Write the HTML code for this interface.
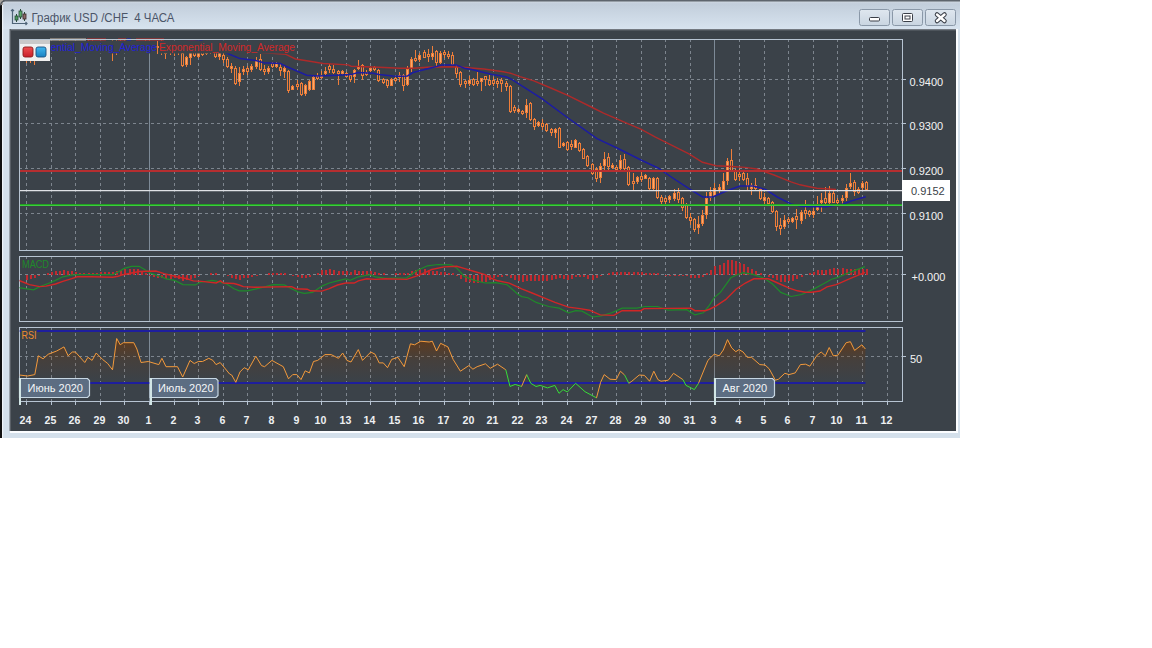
<!DOCTYPE html><html><head><meta charset="utf-8"><style>html,body{margin:0;padding:0;background:#fff;width:1152px;height:648px;overflow:hidden}svg{position:absolute;left:0;top:0}text{font-family:"Liberation Sans",sans-serif}</style></head><body>
<svg width="1152" height="648" viewBox="0 0 1152 648">
<defs>
<linearGradient id="tb" x1="0" y1="0" x2="0" y2="1"><stop offset="0" stop-color="#d2dae2"/><stop offset="0.1" stop-color="#c2cedb"/><stop offset="1" stop-color="#d7e3ef"/></linearGradient>
<linearGradient id="lr" x1="0" y1="0" x2="0" y2="1"><stop offset="0" stop-color="#f05050"/><stop offset="1" stop-color="#c81e28"/></linearGradient><linearGradient id="lb" x1="0" y1="0" x2="0" y2="1"><stop offset="0" stop-color="#40b8f0"/><stop offset="1" stop-color="#1a80c0"/></linearGradient><linearGradient id="btn" x1="0" y1="0" x2="0" y2="1"><stop offset="0" stop-color="#dfe7ef"/><stop offset="1" stop-color="#c9d5e1"/></linearGradient>
<linearGradient id="rsif" gradientUnits="userSpaceOnUse" x1="0" y1="330" x2="0" y2="382"><stop offset="0" stop-color="#6e370a" stop-opacity="0.92"/><stop offset="0.29" stop-color="#6e370a" stop-opacity="0.57"/><stop offset="0.58" stop-color="#6e370a" stop-opacity="0.2"/><stop offset="1" stop-color="#6e370a" stop-opacity="0"/></linearGradient>
<clipPath id="cm"><rect x="19.5" y="39.5" width="883.0" height="211.0"/></clipPath>
<clipPath id="cc"><rect x="19.5" y="256.5" width="883.0" height="65.0"/></clipPath>
<clipPath id="cr"><rect x="19.5" y="327.5" width="883.0" height="74.0"/></clipPath>
<clipPath id="rsiabove"><rect x="0" y="0" width="1152" height="382.7"/></clipPath>
<clipPath id="rsibelow"><rect x="0" y="382.7" width="1152" height="100"/></clipPath>
</defs>
<rect x="0" y="0" width="960" height="438" fill="#d4e0eb"/>
<rect x="2" y="1" width="958" height="28" fill="url(#tb)"/>
<rect x="0" y="0" width="960" height="1.5" fill="#5e656d"/>
<rect x="0" y="5" width="2" height="433" fill="#111"/>
<rect x="0" y="0" width="3" height="5" fill="#a8a49e"/><path d="M0.5 5.5 Q1 1.5 4.5 0.8" fill="none" stroke="#50565c" stroke-width="1.2"/><rect x="2" y="5" width="1.2" height="433" fill="#eef3f8"/>
<g fill="none" stroke="#4f6478" stroke-width="1.2">
<path d="M12.5 9.5 V23.5 H27"/><path d="M11 11 L12.5 9.5 L14 11"/><path d="M25.5 22 L27 23.5 L25.5 25"/>
</g>
<g stroke="#2a4a3a" stroke-width="1"><line x1="16.5" y1="14" x2="16.5" y2="22"/><line x1="20.5" y1="9" x2="20.5" y2="19"/><line x1="24.5" y1="12" x2="24.5" y2="21"/></g>
<rect x="15" y="16" width="3" height="4" fill="#4a9a5a" stroke="#2a4a3a" stroke-width="0.8"/>
<rect x="19" y="11" width="3" height="6" fill="#5aaa6a" stroke="#2a4a3a" stroke-width="0.8"/>
<rect x="23" y="14" width="3" height="5" fill="#8a6a6a" stroke="#3a2a2a" stroke-width="0.8"/>
<text x="31.5" y="21.7" font-size="12" fill="#4b5568" xml:space="preserve" textLength="143" lengthAdjust="spacingAndGlyphs">График USD /CHF  4 ЧАСА</text>
<rect x="859.5" y="9.5" width="30" height="16" rx="2" fill="url(#btn)" stroke="#8a98a8" stroke-width="1"/>
<rect x="892.5" y="9.5" width="30" height="16" rx="2" fill="url(#btn)" stroke="#8a98a8" stroke-width="1"/>
<rect x="925.5" y="9.5" width="30" height="16" rx="2" fill="url(#btn)" stroke="#8a98a8" stroke-width="1"/>
<rect x="869.5" y="17.5" width="10" height="3.5" rx="1" fill="#fff" stroke="#3a3f48" stroke-width="1"/>
<rect x="902.5" y="13.5" width="10" height="8" rx="1" fill="#fff" stroke="#3a3f48" stroke-width="1"/><rect x="905" y="16" width="5" height="3" fill="none" stroke="#3a3f48" stroke-width="1"/>
<path d="M937 14.5 L944.5 21 M944.5 14.5 L937 21" stroke="#3a3f48" stroke-width="4.5" stroke-linecap="round"/><path d="M937 14.5 L944.5 21 M944.5 14.5 L937 21" stroke="#fff" stroke-width="2.4" stroke-linecap="round"/>
<rect x="10" y="29" width="946" height="402" fill="#3b4249"/>
<rect x="10" y="29" width="946" height="1" fill="#747a82"/><rect x="10" y="30" width="946" height="1" fill="#4e555c"/>
<rect x="9" y="29" width="1" height="402" fill="#9aa2aa"/><rect x="10" y="29" width="1" height="402" fill="#5a6067"/>
<rect x="956" y="29" width="2" height="404" fill="#fbfdff"/>
<rect x="10" y="431" width="948" height="2" fill="#fbfdff"/>
<line x1="26.5" y1="39.0" x2="26.5" y2="250.5" stroke="#7d858e" stroke-width="1" stroke-dasharray="3 3" shape-rendering="crispEdges"/>
<line x1="51.5" y1="39.0" x2="51.5" y2="250.5" stroke="#7d858e" stroke-width="1" stroke-dasharray="3 3" shape-rendering="crispEdges"/>
<line x1="75.5" y1="39.0" x2="75.5" y2="250.5" stroke="#7d858e" stroke-width="1" stroke-dasharray="3 3" shape-rendering="crispEdges"/>
<line x1="100.5" y1="39.0" x2="100.5" y2="250.5" stroke="#7d858e" stroke-width="1" stroke-dasharray="3 3" shape-rendering="crispEdges"/>
<line x1="124.5" y1="39.0" x2="124.5" y2="250.5" stroke="#7d858e" stroke-width="1" stroke-dasharray="3 3" shape-rendering="crispEdges"/>
<line x1="149.5" y1="39.5" x2="149.5" y2="250.5" stroke="#7d8a97" stroke-width="1"/>
<line x1="174.5" y1="39.0" x2="174.5" y2="250.5" stroke="#7d858e" stroke-width="1" stroke-dasharray="3 3" shape-rendering="crispEdges"/>
<line x1="198.5" y1="39.0" x2="198.5" y2="250.5" stroke="#7d858e" stroke-width="1" stroke-dasharray="3 3" shape-rendering="crispEdges"/>
<line x1="223.5" y1="39.0" x2="223.5" y2="250.5" stroke="#7d858e" stroke-width="1" stroke-dasharray="3 3" shape-rendering="crispEdges"/>
<line x1="247.5" y1="39.0" x2="247.5" y2="250.5" stroke="#7d858e" stroke-width="1" stroke-dasharray="3 3" shape-rendering="crispEdges"/>
<line x1="272.5" y1="39.0" x2="272.5" y2="250.5" stroke="#7d858e" stroke-width="1" stroke-dasharray="3 3" shape-rendering="crispEdges"/>
<line x1="297.5" y1="39.0" x2="297.5" y2="250.5" stroke="#7d858e" stroke-width="1" stroke-dasharray="3 3" shape-rendering="crispEdges"/>
<line x1="321.5" y1="39.0" x2="321.5" y2="250.5" stroke="#7d858e" stroke-width="1" stroke-dasharray="3 3" shape-rendering="crispEdges"/>
<line x1="346.5" y1="39.0" x2="346.5" y2="250.5" stroke="#7d858e" stroke-width="1" stroke-dasharray="3 3" shape-rendering="crispEdges"/>
<line x1="370.5" y1="39.0" x2="370.5" y2="250.5" stroke="#7d858e" stroke-width="1" stroke-dasharray="3 3" shape-rendering="crispEdges"/>
<line x1="395.5" y1="39.0" x2="395.5" y2="250.5" stroke="#7d858e" stroke-width="1" stroke-dasharray="3 3" shape-rendering="crispEdges"/>
<line x1="419.5" y1="39.0" x2="419.5" y2="250.5" stroke="#7d858e" stroke-width="1" stroke-dasharray="3 3" shape-rendering="crispEdges"/>
<line x1="444.5" y1="39.0" x2="444.5" y2="250.5" stroke="#7d858e" stroke-width="1" stroke-dasharray="3 3" shape-rendering="crispEdges"/>
<line x1="469.5" y1="39.0" x2="469.5" y2="250.5" stroke="#7d858e" stroke-width="1" stroke-dasharray="3 3" shape-rendering="crispEdges"/>
<line x1="493.5" y1="39.0" x2="493.5" y2="250.5" stroke="#7d858e" stroke-width="1" stroke-dasharray="3 3" shape-rendering="crispEdges"/>
<line x1="518.5" y1="39.0" x2="518.5" y2="250.5" stroke="#7d858e" stroke-width="1" stroke-dasharray="3 3" shape-rendering="crispEdges"/>
<line x1="542.5" y1="39.0" x2="542.5" y2="250.5" stroke="#7d858e" stroke-width="1" stroke-dasharray="3 3" shape-rendering="crispEdges"/>
<line x1="567.5" y1="39.0" x2="567.5" y2="250.5" stroke="#7d858e" stroke-width="1" stroke-dasharray="3 3" shape-rendering="crispEdges"/>
<line x1="592.5" y1="39.0" x2="592.5" y2="250.5" stroke="#7d858e" stroke-width="1" stroke-dasharray="3 3" shape-rendering="crispEdges"/>
<line x1="616.5" y1="39.0" x2="616.5" y2="250.5" stroke="#7d858e" stroke-width="1" stroke-dasharray="3 3" shape-rendering="crispEdges"/>
<line x1="641.5" y1="39.0" x2="641.5" y2="250.5" stroke="#7d858e" stroke-width="1" stroke-dasharray="3 3" shape-rendering="crispEdges"/>
<line x1="665.5" y1="39.0" x2="665.5" y2="250.5" stroke="#7d858e" stroke-width="1" stroke-dasharray="3 3" shape-rendering="crispEdges"/>
<line x1="690.5" y1="39.0" x2="690.5" y2="250.5" stroke="#7d858e" stroke-width="1" stroke-dasharray="3 3" shape-rendering="crispEdges"/>
<line x1="714.5" y1="39.5" x2="714.5" y2="250.5" stroke="#7d8a97" stroke-width="1"/>
<line x1="739.5" y1="39.0" x2="739.5" y2="250.5" stroke="#7d858e" stroke-width="1" stroke-dasharray="3 3" shape-rendering="crispEdges"/>
<line x1="764.5" y1="39.0" x2="764.5" y2="250.5" stroke="#7d858e" stroke-width="1" stroke-dasharray="3 3" shape-rendering="crispEdges"/>
<line x1="788.5" y1="39.0" x2="788.5" y2="250.5" stroke="#7d858e" stroke-width="1" stroke-dasharray="3 3" shape-rendering="crispEdges"/>
<line x1="813.5" y1="39.0" x2="813.5" y2="250.5" stroke="#7d858e" stroke-width="1" stroke-dasharray="3 3" shape-rendering="crispEdges"/>
<line x1="837.5" y1="39.0" x2="837.5" y2="250.5" stroke="#7d858e" stroke-width="1" stroke-dasharray="3 3" shape-rendering="crispEdges"/>
<line x1="862.5" y1="39.0" x2="862.5" y2="250.5" stroke="#7d858e" stroke-width="1" stroke-dasharray="3 3" shape-rendering="crispEdges"/>
<line x1="887.5" y1="39.0" x2="887.5" y2="250.5" stroke="#7d858e" stroke-width="1" stroke-dasharray="3 3" shape-rendering="crispEdges"/>
<line x1="19.0" y1="79.5" x2="902.5" y2="79.5" stroke="#7d858e" stroke-width="1" stroke-dasharray="3 3" shape-rendering="crispEdges"/>
<line x1="19.0" y1="123.5" x2="902.5" y2="123.5" stroke="#7d858e" stroke-width="1" stroke-dasharray="3 3" shape-rendering="crispEdges"/>
<line x1="19.0" y1="168.5" x2="902.5" y2="168.5" stroke="#7d858e" stroke-width="1" stroke-dasharray="3 3" shape-rendering="crispEdges"/>
<line x1="19.0" y1="213.5" x2="902.5" y2="213.5" stroke="#7d858e" stroke-width="1" stroke-dasharray="3 3" shape-rendering="crispEdges"/>
<line x1="26.5" y1="256.0" x2="26.5" y2="321.5" stroke="#7d858e" stroke-width="1" stroke-dasharray="3 3" shape-rendering="crispEdges"/>
<line x1="51.5" y1="256.0" x2="51.5" y2="321.5" stroke="#7d858e" stroke-width="1" stroke-dasharray="3 3" shape-rendering="crispEdges"/>
<line x1="75.5" y1="256.0" x2="75.5" y2="321.5" stroke="#7d858e" stroke-width="1" stroke-dasharray="3 3" shape-rendering="crispEdges"/>
<line x1="100.5" y1="256.0" x2="100.5" y2="321.5" stroke="#7d858e" stroke-width="1" stroke-dasharray="3 3" shape-rendering="crispEdges"/>
<line x1="124.5" y1="256.0" x2="124.5" y2="321.5" stroke="#7d858e" stroke-width="1" stroke-dasharray="3 3" shape-rendering="crispEdges"/>
<line x1="149.5" y1="256.5" x2="149.5" y2="321.5" stroke="#7d8a97" stroke-width="1"/>
<line x1="174.5" y1="256.0" x2="174.5" y2="321.5" stroke="#7d858e" stroke-width="1" stroke-dasharray="3 3" shape-rendering="crispEdges"/>
<line x1="198.5" y1="256.0" x2="198.5" y2="321.5" stroke="#7d858e" stroke-width="1" stroke-dasharray="3 3" shape-rendering="crispEdges"/>
<line x1="223.5" y1="256.0" x2="223.5" y2="321.5" stroke="#7d858e" stroke-width="1" stroke-dasharray="3 3" shape-rendering="crispEdges"/>
<line x1="247.5" y1="256.0" x2="247.5" y2="321.5" stroke="#7d858e" stroke-width="1" stroke-dasharray="3 3" shape-rendering="crispEdges"/>
<line x1="272.5" y1="256.0" x2="272.5" y2="321.5" stroke="#7d858e" stroke-width="1" stroke-dasharray="3 3" shape-rendering="crispEdges"/>
<line x1="297.5" y1="256.0" x2="297.5" y2="321.5" stroke="#7d858e" stroke-width="1" stroke-dasharray="3 3" shape-rendering="crispEdges"/>
<line x1="321.5" y1="256.0" x2="321.5" y2="321.5" stroke="#7d858e" stroke-width="1" stroke-dasharray="3 3" shape-rendering="crispEdges"/>
<line x1="346.5" y1="256.0" x2="346.5" y2="321.5" stroke="#7d858e" stroke-width="1" stroke-dasharray="3 3" shape-rendering="crispEdges"/>
<line x1="370.5" y1="256.0" x2="370.5" y2="321.5" stroke="#7d858e" stroke-width="1" stroke-dasharray="3 3" shape-rendering="crispEdges"/>
<line x1="395.5" y1="256.0" x2="395.5" y2="321.5" stroke="#7d858e" stroke-width="1" stroke-dasharray="3 3" shape-rendering="crispEdges"/>
<line x1="419.5" y1="256.0" x2="419.5" y2="321.5" stroke="#7d858e" stroke-width="1" stroke-dasharray="3 3" shape-rendering="crispEdges"/>
<line x1="444.5" y1="256.0" x2="444.5" y2="321.5" stroke="#7d858e" stroke-width="1" stroke-dasharray="3 3" shape-rendering="crispEdges"/>
<line x1="469.5" y1="256.0" x2="469.5" y2="321.5" stroke="#7d858e" stroke-width="1" stroke-dasharray="3 3" shape-rendering="crispEdges"/>
<line x1="493.5" y1="256.0" x2="493.5" y2="321.5" stroke="#7d858e" stroke-width="1" stroke-dasharray="3 3" shape-rendering="crispEdges"/>
<line x1="518.5" y1="256.0" x2="518.5" y2="321.5" stroke="#7d858e" stroke-width="1" stroke-dasharray="3 3" shape-rendering="crispEdges"/>
<line x1="542.5" y1="256.0" x2="542.5" y2="321.5" stroke="#7d858e" stroke-width="1" stroke-dasharray="3 3" shape-rendering="crispEdges"/>
<line x1="567.5" y1="256.0" x2="567.5" y2="321.5" stroke="#7d858e" stroke-width="1" stroke-dasharray="3 3" shape-rendering="crispEdges"/>
<line x1="592.5" y1="256.0" x2="592.5" y2="321.5" stroke="#7d858e" stroke-width="1" stroke-dasharray="3 3" shape-rendering="crispEdges"/>
<line x1="616.5" y1="256.0" x2="616.5" y2="321.5" stroke="#7d858e" stroke-width="1" stroke-dasharray="3 3" shape-rendering="crispEdges"/>
<line x1="641.5" y1="256.0" x2="641.5" y2="321.5" stroke="#7d858e" stroke-width="1" stroke-dasharray="3 3" shape-rendering="crispEdges"/>
<line x1="665.5" y1="256.0" x2="665.5" y2="321.5" stroke="#7d858e" stroke-width="1" stroke-dasharray="3 3" shape-rendering="crispEdges"/>
<line x1="690.5" y1="256.0" x2="690.5" y2="321.5" stroke="#7d858e" stroke-width="1" stroke-dasharray="3 3" shape-rendering="crispEdges"/>
<line x1="714.5" y1="256.5" x2="714.5" y2="321.5" stroke="#7d8a97" stroke-width="1"/>
<line x1="739.5" y1="256.0" x2="739.5" y2="321.5" stroke="#7d858e" stroke-width="1" stroke-dasharray="3 3" shape-rendering="crispEdges"/>
<line x1="764.5" y1="256.0" x2="764.5" y2="321.5" stroke="#7d858e" stroke-width="1" stroke-dasharray="3 3" shape-rendering="crispEdges"/>
<line x1="788.5" y1="256.0" x2="788.5" y2="321.5" stroke="#7d858e" stroke-width="1" stroke-dasharray="3 3" shape-rendering="crispEdges"/>
<line x1="813.5" y1="256.0" x2="813.5" y2="321.5" stroke="#7d858e" stroke-width="1" stroke-dasharray="3 3" shape-rendering="crispEdges"/>
<line x1="837.5" y1="256.0" x2="837.5" y2="321.5" stroke="#7d858e" stroke-width="1" stroke-dasharray="3 3" shape-rendering="crispEdges"/>
<line x1="862.5" y1="256.0" x2="862.5" y2="321.5" stroke="#7d858e" stroke-width="1" stroke-dasharray="3 3" shape-rendering="crispEdges"/>
<line x1="887.5" y1="256.0" x2="887.5" y2="321.5" stroke="#7d858e" stroke-width="1" stroke-dasharray="3 3" shape-rendering="crispEdges"/>
<line x1="19.0" y1="274.5" x2="902.5" y2="274.5" stroke="#7d858e" stroke-width="1" stroke-dasharray="3 3" shape-rendering="crispEdges"/>
<line x1="26.5" y1="327.0" x2="26.5" y2="401.5" stroke="#7d858e" stroke-width="1" stroke-dasharray="3 3" shape-rendering="crispEdges"/>
<line x1="51.5" y1="327.0" x2="51.5" y2="401.5" stroke="#7d858e" stroke-width="1" stroke-dasharray="3 3" shape-rendering="crispEdges"/>
<line x1="75.5" y1="327.0" x2="75.5" y2="401.5" stroke="#7d858e" stroke-width="1" stroke-dasharray="3 3" shape-rendering="crispEdges"/>
<line x1="100.5" y1="327.0" x2="100.5" y2="401.5" stroke="#7d858e" stroke-width="1" stroke-dasharray="3 3" shape-rendering="crispEdges"/>
<line x1="124.5" y1="327.0" x2="124.5" y2="401.5" stroke="#7d858e" stroke-width="1" stroke-dasharray="3 3" shape-rendering="crispEdges"/>
<line x1="149.5" y1="327.5" x2="149.5" y2="401.5" stroke="#7d8a97" stroke-width="1"/>
<line x1="174.5" y1="327.0" x2="174.5" y2="401.5" stroke="#7d858e" stroke-width="1" stroke-dasharray="3 3" shape-rendering="crispEdges"/>
<line x1="198.5" y1="327.0" x2="198.5" y2="401.5" stroke="#7d858e" stroke-width="1" stroke-dasharray="3 3" shape-rendering="crispEdges"/>
<line x1="223.5" y1="327.0" x2="223.5" y2="401.5" stroke="#7d858e" stroke-width="1" stroke-dasharray="3 3" shape-rendering="crispEdges"/>
<line x1="247.5" y1="327.0" x2="247.5" y2="401.5" stroke="#7d858e" stroke-width="1" stroke-dasharray="3 3" shape-rendering="crispEdges"/>
<line x1="272.5" y1="327.0" x2="272.5" y2="401.5" stroke="#7d858e" stroke-width="1" stroke-dasharray="3 3" shape-rendering="crispEdges"/>
<line x1="297.5" y1="327.0" x2="297.5" y2="401.5" stroke="#7d858e" stroke-width="1" stroke-dasharray="3 3" shape-rendering="crispEdges"/>
<line x1="321.5" y1="327.0" x2="321.5" y2="401.5" stroke="#7d858e" stroke-width="1" stroke-dasharray="3 3" shape-rendering="crispEdges"/>
<line x1="346.5" y1="327.0" x2="346.5" y2="401.5" stroke="#7d858e" stroke-width="1" stroke-dasharray="3 3" shape-rendering="crispEdges"/>
<line x1="370.5" y1="327.0" x2="370.5" y2="401.5" stroke="#7d858e" stroke-width="1" stroke-dasharray="3 3" shape-rendering="crispEdges"/>
<line x1="395.5" y1="327.0" x2="395.5" y2="401.5" stroke="#7d858e" stroke-width="1" stroke-dasharray="3 3" shape-rendering="crispEdges"/>
<line x1="419.5" y1="327.0" x2="419.5" y2="401.5" stroke="#7d858e" stroke-width="1" stroke-dasharray="3 3" shape-rendering="crispEdges"/>
<line x1="444.5" y1="327.0" x2="444.5" y2="401.5" stroke="#7d858e" stroke-width="1" stroke-dasharray="3 3" shape-rendering="crispEdges"/>
<line x1="469.5" y1="327.0" x2="469.5" y2="401.5" stroke="#7d858e" stroke-width="1" stroke-dasharray="3 3" shape-rendering="crispEdges"/>
<line x1="493.5" y1="327.0" x2="493.5" y2="401.5" stroke="#7d858e" stroke-width="1" stroke-dasharray="3 3" shape-rendering="crispEdges"/>
<line x1="518.5" y1="327.0" x2="518.5" y2="401.5" stroke="#7d858e" stroke-width="1" stroke-dasharray="3 3" shape-rendering="crispEdges"/>
<line x1="542.5" y1="327.0" x2="542.5" y2="401.5" stroke="#7d858e" stroke-width="1" stroke-dasharray="3 3" shape-rendering="crispEdges"/>
<line x1="567.5" y1="327.0" x2="567.5" y2="401.5" stroke="#7d858e" stroke-width="1" stroke-dasharray="3 3" shape-rendering="crispEdges"/>
<line x1="592.5" y1="327.0" x2="592.5" y2="401.5" stroke="#7d858e" stroke-width="1" stroke-dasharray="3 3" shape-rendering="crispEdges"/>
<line x1="616.5" y1="327.0" x2="616.5" y2="401.5" stroke="#7d858e" stroke-width="1" stroke-dasharray="3 3" shape-rendering="crispEdges"/>
<line x1="641.5" y1="327.0" x2="641.5" y2="401.5" stroke="#7d858e" stroke-width="1" stroke-dasharray="3 3" shape-rendering="crispEdges"/>
<line x1="665.5" y1="327.0" x2="665.5" y2="401.5" stroke="#7d858e" stroke-width="1" stroke-dasharray="3 3" shape-rendering="crispEdges"/>
<line x1="690.5" y1="327.0" x2="690.5" y2="401.5" stroke="#7d858e" stroke-width="1" stroke-dasharray="3 3" shape-rendering="crispEdges"/>
<line x1="714.5" y1="327.5" x2="714.5" y2="401.5" stroke="#7d8a97" stroke-width="1"/>
<line x1="739.5" y1="327.0" x2="739.5" y2="401.5" stroke="#7d858e" stroke-width="1" stroke-dasharray="3 3" shape-rendering="crispEdges"/>
<line x1="764.5" y1="327.0" x2="764.5" y2="401.5" stroke="#7d858e" stroke-width="1" stroke-dasharray="3 3" shape-rendering="crispEdges"/>
<line x1="788.5" y1="327.0" x2="788.5" y2="401.5" stroke="#7d858e" stroke-width="1" stroke-dasharray="3 3" shape-rendering="crispEdges"/>
<line x1="813.5" y1="327.0" x2="813.5" y2="401.5" stroke="#7d858e" stroke-width="1" stroke-dasharray="3 3" shape-rendering="crispEdges"/>
<line x1="837.5" y1="327.0" x2="837.5" y2="401.5" stroke="#7d858e" stroke-width="1" stroke-dasharray="3 3" shape-rendering="crispEdges"/>
<line x1="862.5" y1="327.0" x2="862.5" y2="401.5" stroke="#7d858e" stroke-width="1" stroke-dasharray="3 3" shape-rendering="crispEdges"/>
<line x1="887.5" y1="327.0" x2="887.5" y2="401.5" stroke="#7d858e" stroke-width="1" stroke-dasharray="3 3" shape-rendering="crispEdges"/>
<line x1="19.0" y1="356.5" x2="902.5" y2="356.5" stroke="#7d858e" stroke-width="1" stroke-dasharray="3 3" shape-rendering="crispEdges"/>
<g clip-path="url(#cm)">
<g shape-rendering="crispEdges">
<line x1="26.5" y1="38.0" x2="26.5" y2="62.6" stroke="#ee7e3a" stroke-width="1"/>
<rect x="25.5" y="40.0" width="2" height="12.0" fill="#3b4249" stroke="#ee7e3a" stroke-width="1"/>
<line x1="30.5" y1="38.0" x2="30.5" y2="63.0" stroke="#ee7e3a" stroke-width="1"/>
<rect x="29.5" y="42.0" width="2" height="13.0" fill="#f9aa6c" stroke="#ee7e3a" stroke-width="1"/>
<line x1="34.5" y1="40.0" x2="34.5" y2="65.0" stroke="#ee7e3a" stroke-width="1"/>
<rect x="33.5" y="44.0" width="2" height="14.0" fill="#3b4249" stroke="#ee7e3a" stroke-width="1"/>
<line x1="38.5" y1="26.6" x2="38.5" y2="38.6" stroke="#ee7e3a" stroke-width="1"/>
<rect x="37.5" y="29.6" width="2" height="6.0" fill="#3b4249" stroke="#ee7e3a" stroke-width="1"/>
<line x1="42.5" y1="21.3" x2="42.5" y2="33.3" stroke="#ee7e3a" stroke-width="1"/>
<rect x="41.5" y="24.3" width="2" height="6.0" fill="#f9aa6c" stroke="#ee7e3a" stroke-width="1"/>
<line x1="47.5" y1="18.1" x2="47.5" y2="30.1" stroke="#ee7e3a" stroke-width="1"/>
<rect x="46.5" y="21.1" width="2" height="6.0" fill="#3b4249" stroke="#ee7e3a" stroke-width="1"/>
<line x1="51.5" y1="19.4" x2="51.5" y2="31.4" stroke="#ee7e3a" stroke-width="1"/>
<rect x="50.5" y="22.4" width="2" height="6.0" fill="#f9aa6c" stroke="#ee7e3a" stroke-width="1"/>
<line x1="55.5" y1="24.1" x2="55.5" y2="36.1" stroke="#ee7e3a" stroke-width="1"/>
<rect x="54.5" y="27.1" width="2" height="6.0" fill="#3b4249" stroke="#ee7e3a" stroke-width="1"/>
<line x1="59.5" y1="28.8" x2="59.5" y2="40.8" stroke="#ee7e3a" stroke-width="1"/>
<rect x="58.5" y="31.8" width="2" height="6.0" fill="#f9aa6c" stroke="#ee7e3a" stroke-width="1"/>
<line x1="63.5" y1="29.8" x2="63.5" y2="41.8" stroke="#ee7e3a" stroke-width="1"/>
<rect x="62.5" y="32.8" width="2" height="6.0" fill="#3b4249" stroke="#ee7e3a" stroke-width="1"/>
<line x1="67.5" y1="26.5" x2="67.5" y2="38.5" stroke="#ee7e3a" stroke-width="1"/>
<rect x="66.5" y="29.5" width="2" height="6.0" fill="#f9aa6c" stroke="#ee7e3a" stroke-width="1"/>
<line x1="71.5" y1="21.3" x2="71.5" y2="33.3" stroke="#ee7e3a" stroke-width="1"/>
<rect x="70.5" y="24.3" width="2" height="6.0" fill="#3b4249" stroke="#ee7e3a" stroke-width="1"/>
<line x1="75.5" y1="18.1" x2="75.5" y2="30.1" stroke="#ee7e3a" stroke-width="1"/>
<rect x="74.5" y="21.1" width="2" height="6.0" fill="#f9aa6c" stroke="#ee7e3a" stroke-width="1"/>
<line x1="79.5" y1="19.4" x2="79.5" y2="31.4" stroke="#ee7e3a" stroke-width="1"/>
<rect x="78.5" y="22.4" width="2" height="6.0" fill="#3b4249" stroke="#ee7e3a" stroke-width="1"/>
<line x1="83.5" y1="24.2" x2="83.5" y2="36.2" stroke="#ee7e3a" stroke-width="1"/>
<rect x="82.5" y="27.2" width="2" height="6.0" fill="#f9aa6c" stroke="#ee7e3a" stroke-width="1"/>
<line x1="88.5" y1="28.8" x2="88.5" y2="40.8" stroke="#ee7e3a" stroke-width="1"/>
<rect x="87.5" y="31.8" width="2" height="6.0" fill="#3b4249" stroke="#ee7e3a" stroke-width="1"/>
<line x1="92.5" y1="29.8" x2="92.5" y2="41.8" stroke="#ee7e3a" stroke-width="1"/>
<rect x="91.5" y="32.8" width="2" height="6.0" fill="#f9aa6c" stroke="#ee7e3a" stroke-width="1"/>
<line x1="96.5" y1="26.4" x2="96.5" y2="38.4" stroke="#ee7e3a" stroke-width="1"/>
<rect x="95.5" y="29.4" width="2" height="6.0" fill="#3b4249" stroke="#ee7e3a" stroke-width="1"/>
<line x1="100.5" y1="21.2" x2="100.5" y2="33.2" stroke="#ee7e3a" stroke-width="1"/>
<rect x="99.5" y="24.2" width="2" height="6.0" fill="#f9aa6c" stroke="#ee7e3a" stroke-width="1"/>
<line x1="104.5" y1="18.1" x2="104.5" y2="30.1" stroke="#ee7e3a" stroke-width="1"/>
<rect x="103.5" y="21.1" width="2" height="6.0" fill="#3b4249" stroke="#ee7e3a" stroke-width="1"/>
<line x1="108.5" y1="19.5" x2="108.5" y2="31.5" stroke="#ee7e3a" stroke-width="1"/>
<rect x="107.5" y="22.5" width="2" height="6.0" fill="#f9aa6c" stroke="#ee7e3a" stroke-width="1"/>
<line x1="112.5" y1="40.0" x2="112.5" y2="60.5" stroke="#ee7e3a" stroke-width="1"/>
<rect x="111.5" y="44.0" width="2" height="6.0" fill="#f9aa6c" stroke="#ee7e3a" stroke-width="1"/>
<line x1="116.5" y1="40.0" x2="116.5" y2="55.0" stroke="#ee7e3a" stroke-width="1"/>
<rect x="115.5" y="44.0" width="2" height="8.0" fill="#3b4249" stroke="#ee7e3a" stroke-width="1"/>
<line x1="120.5" y1="29.8" x2="120.5" y2="41.8" stroke="#ee7e3a" stroke-width="1"/>
<rect x="119.5" y="32.8" width="2" height="6.0" fill="#3b4249" stroke="#ee7e3a" stroke-width="1"/>
<line x1="124.5" y1="26.3" x2="124.5" y2="38.3" stroke="#ee7e3a" stroke-width="1"/>
<rect x="123.5" y="29.3" width="2" height="6.0" fill="#f9aa6c" stroke="#ee7e3a" stroke-width="1"/>
<line x1="129.5" y1="21.1" x2="129.5" y2="33.1" stroke="#ee7e3a" stroke-width="1"/>
<rect x="128.5" y="24.1" width="2" height="6.0" fill="#3b4249" stroke="#ee7e3a" stroke-width="1"/>
<line x1="133.5" y1="18.1" x2="133.5" y2="30.1" stroke="#ee7e3a" stroke-width="1"/>
<rect x="132.5" y="21.1" width="2" height="6.0" fill="#f9aa6c" stroke="#ee7e3a" stroke-width="1"/>
<line x1="137.5" y1="19.6" x2="137.5" y2="31.6" stroke="#ee7e3a" stroke-width="1"/>
<rect x="136.5" y="22.6" width="2" height="6.0" fill="#3b4249" stroke="#ee7e3a" stroke-width="1"/>
<line x1="141.5" y1="24.4" x2="141.5" y2="36.4" stroke="#ee7e3a" stroke-width="1"/>
<rect x="140.5" y="27.4" width="2" height="6.0" fill="#f9aa6c" stroke="#ee7e3a" stroke-width="1"/>
<line x1="145.5" y1="28.9" x2="145.5" y2="40.9" stroke="#ee7e3a" stroke-width="1"/>
<rect x="144.5" y="31.9" width="2" height="6.0" fill="#3b4249" stroke="#ee7e3a" stroke-width="1"/>
<line x1="149.5" y1="29.7" x2="149.5" y2="41.7" stroke="#ee7e3a" stroke-width="1"/>
<rect x="148.5" y="32.7" width="2" height="6.0" fill="#f9aa6c" stroke="#ee7e3a" stroke-width="1"/>
<line x1="153.5" y1="26.2" x2="153.5" y2="38.2" stroke="#ee7e3a" stroke-width="1"/>
<rect x="152.5" y="29.2" width="2" height="6.0" fill="#3b4249" stroke="#ee7e3a" stroke-width="1"/>
<line x1="157.5" y1="41.0" x2="157.5" y2="53.5" stroke="#ee7e3a" stroke-width="1"/>
<rect x="156.5" y="46.0" width="2" height="1.5" fill="#3b4249" stroke="#ee7e3a" stroke-width="1"/>
<line x1="161.5" y1="40.0" x2="161.5" y2="55.0" stroke="#ee7e3a" stroke-width="1"/>
<rect x="160.5" y="44.0" width="2" height="6.0" fill="#3b4249" stroke="#ee7e3a" stroke-width="1"/>
<line x1="165.5" y1="42.0" x2="165.5" y2="59.0" stroke="#ee7e3a" stroke-width="1"/>
<rect x="164.5" y="46.0" width="2" height="7.5" fill="#3b4249" stroke="#ee7e3a" stroke-width="1"/>
<line x1="170.5" y1="46.0" x2="170.5" y2="55.0" stroke="#ee7e3a" stroke-width="1"/>
<rect x="169.5" y="48.5" width="2" height="2.0" fill="#3b4249" stroke="#ee7e3a" stroke-width="1"/>
<line x1="174.5" y1="46.0" x2="174.5" y2="55.5" stroke="#ee7e3a" stroke-width="1"/>
<rect x="173.5" y="48.5" width="2" height="2.0" fill="#3b4249" stroke="#ee7e3a" stroke-width="1"/>
<line x1="178.5" y1="46.0" x2="178.5" y2="55.0" stroke="#ee7e3a" stroke-width="1"/>
<rect x="177.5" y="48.5" width="2" height="2.0" fill="#3b4249" stroke="#ee7e3a" stroke-width="1"/>
<line x1="182.5" y1="50.0" x2="182.5" y2="67.0" stroke="#ee7e3a" stroke-width="1"/>
<rect x="181.5" y="53.8" width="2" height="12.0" fill="#3b4249" stroke="#ee7e3a" stroke-width="1"/>
<line x1="186.5" y1="56.0" x2="186.5" y2="67.0" stroke="#ee7e3a" stroke-width="1"/>
<rect x="185.5" y="57.4" width="2" height="7.3" fill="#f9aa6c" stroke="#ee7e3a" stroke-width="1"/>
<line x1="190.5" y1="48.0" x2="190.5" y2="64.7" stroke="#ee7e3a" stroke-width="1"/>
<rect x="189.5" y="50.0" width="2" height="7.0" fill="#f9aa6c" stroke="#ee7e3a" stroke-width="1"/>
<line x1="194.5" y1="46.0" x2="194.5" y2="57.0" stroke="#ee7e3a" stroke-width="1"/>
<rect x="193.5" y="50.0" width="2" height="5.0" fill="#3b4249" stroke="#ee7e3a" stroke-width="1"/>
<line x1="198.5" y1="46.0" x2="198.5" y2="58.0" stroke="#ee7e3a" stroke-width="1"/>
<rect x="197.5" y="50.0" width="2" height="6.0" fill="#f9aa6c" stroke="#ee7e3a" stroke-width="1"/>
<line x1="202.5" y1="46.0" x2="202.5" y2="56.0" stroke="#ee7e3a" stroke-width="1"/>
<rect x="201.5" y="50.0" width="2" height="4.0" fill="#3b4249" stroke="#ee7e3a" stroke-width="1"/>
<line x1="206.5" y1="46.0" x2="206.5" y2="55.0" stroke="#ee7e3a" stroke-width="1"/>
<rect x="205.5" y="50.0" width="2" height="3.0" fill="#f9aa6c" stroke="#ee7e3a" stroke-width="1"/>
<line x1="210.5" y1="44.0" x2="210.5" y2="54.0" stroke="#ee7e3a" stroke-width="1"/>
<rect x="209.5" y="48.0" width="2" height="4.0" fill="#3b4249" stroke="#ee7e3a" stroke-width="1"/>
<line x1="215.5" y1="46.0" x2="215.5" y2="58.0" stroke="#ee7e3a" stroke-width="1"/>
<rect x="214.5" y="50.0" width="2" height="6.0" fill="#3b4249" stroke="#ee7e3a" stroke-width="1"/>
<line x1="219.5" y1="46.0" x2="219.5" y2="60.0" stroke="#ee7e3a" stroke-width="1"/>
<rect x="218.5" y="52.0" width="2" height="4.0" fill="#f9aa6c" stroke="#ee7e3a" stroke-width="1"/>
<line x1="223.5" y1="53.0" x2="223.5" y2="63.0" stroke="#ee7e3a" stroke-width="1"/>
<rect x="222.5" y="55.3" width="2" height="4.2" fill="#3b4249" stroke="#ee7e3a" stroke-width="1"/>
<line x1="227.5" y1="57.0" x2="227.5" y2="68.0" stroke="#ee7e3a" stroke-width="1"/>
<rect x="226.5" y="59.5" width="2" height="7.3" fill="#3b4249" stroke="#ee7e3a" stroke-width="1"/>
<line x1="231.5" y1="62.6" x2="231.5" y2="73.0" stroke="#ee7e3a" stroke-width="1"/>
<rect x="230.5" y="66.0" width="2" height="2.9" fill="#f9aa6c" stroke="#ee7e3a" stroke-width="1"/>
<line x1="235.5" y1="66.0" x2="235.5" y2="85.0" stroke="#ee7e3a" stroke-width="1"/>
<rect x="234.5" y="68.3" width="2" height="15.1" fill="#3b4249" stroke="#ee7e3a" stroke-width="1"/>
<line x1="239.5" y1="67.3" x2="239.5" y2="86.0" stroke="#ee7e3a" stroke-width="1"/>
<rect x="238.5" y="73.0" width="2" height="8.9" fill="#f9aa6c" stroke="#ee7e3a" stroke-width="1"/>
<line x1="243.5" y1="66.0" x2="243.5" y2="75.0" stroke="#ee7e3a" stroke-width="1"/>
<rect x="242.5" y="69.2" width="2" height="2.4" fill="#f9aa6c" stroke="#ee7e3a" stroke-width="1"/>
<line x1="247.5" y1="66.0" x2="247.5" y2="75.0" stroke="#ee7e3a" stroke-width="1"/>
<rect x="246.5" y="68.8" width="2" height="2.4" fill="#3b4249" stroke="#ee7e3a" stroke-width="1"/>
<line x1="251.5" y1="64.0" x2="251.5" y2="72.0" stroke="#ee7e3a" stroke-width="1"/>
<rect x="250.5" y="66.8" width="2" height="2.4" fill="#f9aa6c" stroke="#ee7e3a" stroke-width="1"/>
<line x1="256.5" y1="57.0" x2="256.5" y2="69.0" stroke="#ee7e3a" stroke-width="1"/>
<rect x="255.5" y="60.0" width="2" height="6.0" fill="#f9aa6c" stroke="#ee7e3a" stroke-width="1"/>
<line x1="260.5" y1="54.4" x2="260.5" y2="71.0" stroke="#ee7e3a" stroke-width="1"/>
<rect x="259.5" y="59.3" width="2" height="10.4" fill="#3b4249" stroke="#ee7e3a" stroke-width="1"/>
<line x1="264.5" y1="64.9" x2="264.5" y2="75.0" stroke="#ee7e3a" stroke-width="1"/>
<rect x="263.5" y="69.2" width="2" height="2.4" fill="#3b4249" stroke="#ee7e3a" stroke-width="1"/>
<line x1="268.5" y1="66.0" x2="268.5" y2="74.0" stroke="#ee7e3a" stroke-width="1"/>
<rect x="267.5" y="68.8" width="2" height="2.4" fill="#f9aa6c" stroke="#ee7e3a" stroke-width="1"/>
<line x1="272.5" y1="62.0" x2="272.5" y2="68.0" stroke="#ee7e3a" stroke-width="1"/>
<rect x="271.5" y="63.8" width="2" height="2.4" fill="#3b4249" stroke="#ee7e3a" stroke-width="1"/>
<line x1="276.5" y1="62.0" x2="276.5" y2="68.0" stroke="#ee7e3a" stroke-width="1"/>
<rect x="275.5" y="63.8" width="2" height="2.4" fill="#f9aa6c" stroke="#ee7e3a" stroke-width="1"/>
<line x1="280.5" y1="63.0" x2="280.5" y2="76.0" stroke="#ee7e3a" stroke-width="1"/>
<rect x="279.5" y="67.0" width="2" height="3.4" fill="#3b4249" stroke="#ee7e3a" stroke-width="1"/>
<line x1="284.5" y1="65.0" x2="284.5" y2="78.0" stroke="#ee7e3a" stroke-width="1"/>
<rect x="283.5" y="68.8" width="2" height="2.4" fill="#f9aa6c" stroke="#ee7e3a" stroke-width="1"/>
<line x1="288.5" y1="70.0" x2="288.5" y2="92.6" stroke="#ee7e3a" stroke-width="1"/>
<rect x="287.5" y="71.0" width="2" height="19.5" fill="#3b4249" stroke="#ee7e3a" stroke-width="1"/>
<line x1="292.5" y1="85.0" x2="292.5" y2="90.0" stroke="#ee7e3a" stroke-width="1"/>
<rect x="291.5" y="86.6" width="2" height="2.4" fill="#f9aa6c" stroke="#ee7e3a" stroke-width="1"/>
<line x1="297.5" y1="80.0" x2="297.5" y2="90.0" stroke="#ee7e3a" stroke-width="1"/>
<rect x="296.5" y="84.5" width="2" height="2.4" fill="#3b4249" stroke="#ee7e3a" stroke-width="1"/>
<line x1="301.5" y1="82.0" x2="301.5" y2="96.0" stroke="#ee7e3a" stroke-width="1"/>
<rect x="300.5" y="83.6" width="2" height="11.1" fill="#3b4249" stroke="#ee7e3a" stroke-width="1"/>
<line x1="305.5" y1="84.0" x2="305.5" y2="96.0" stroke="#ee7e3a" stroke-width="1"/>
<rect x="304.5" y="85.7" width="2" height="7.6" fill="#f9aa6c" stroke="#ee7e3a" stroke-width="1"/>
<line x1="309.5" y1="80.0" x2="309.5" y2="91.0" stroke="#ee7e3a" stroke-width="1"/>
<rect x="308.5" y="81.5" width="2" height="8.4" fill="#f9aa6c" stroke="#ee7e3a" stroke-width="1"/>
<line x1="313.5" y1="76.0" x2="313.5" y2="90.0" stroke="#ee7e3a" stroke-width="1"/>
<rect x="312.5" y="77.4" width="2" height="11.8" fill="#f9aa6c" stroke="#ee7e3a" stroke-width="1"/>
<line x1="317.5" y1="72.5" x2="317.5" y2="80.0" stroke="#ee7e3a" stroke-width="1"/>
<rect x="316.5" y="76.2" width="2" height="2.4" fill="#3b4249" stroke="#ee7e3a" stroke-width="1"/>
<line x1="321.5" y1="71.0" x2="321.5" y2="79.0" stroke="#ee7e3a" stroke-width="1"/>
<rect x="320.5" y="75.5" width="2" height="2.4" fill="#f9aa6c" stroke="#ee7e3a" stroke-width="1"/>
<line x1="325.5" y1="67.0" x2="325.5" y2="75.0" stroke="#ee7e3a" stroke-width="1"/>
<rect x="324.5" y="71.3" width="2" height="2.4" fill="#f9aa6c" stroke="#ee7e3a" stroke-width="1"/>
<line x1="329.5" y1="63.5" x2="329.5" y2="72.5" stroke="#ee7e3a" stroke-width="1"/>
<rect x="328.5" y="66.8" width="2" height="2.4" fill="#3b4249" stroke="#ee7e3a" stroke-width="1"/>
<line x1="333.5" y1="65.0" x2="333.5" y2="74.0" stroke="#ee7e3a" stroke-width="1"/>
<rect x="332.5" y="69.8" width="2" height="2.4" fill="#3b4249" stroke="#ee7e3a" stroke-width="1"/>
<line x1="338.5" y1="70.0" x2="338.5" y2="85.0" stroke="#ee7e3a" stroke-width="1"/>
<rect x="337.5" y="71.3" width="2" height="2.4" fill="#3b4249" stroke="#ee7e3a" stroke-width="1"/>
<line x1="342.5" y1="70.0" x2="342.5" y2="75.0" stroke="#ee7e3a" stroke-width="1"/>
<rect x="341.5" y="71.3" width="2" height="2.4" fill="#f9aa6c" stroke="#ee7e3a" stroke-width="1"/>
<line x1="346.5" y1="72.0" x2="346.5" y2="77.0" stroke="#ee7e3a" stroke-width="1"/>
<rect x="345.5" y="73.8" width="2" height="2.4" fill="#3b4249" stroke="#ee7e3a" stroke-width="1"/>
<line x1="350.5" y1="74.0" x2="350.5" y2="82.0" stroke="#ee7e3a" stroke-width="1"/>
<rect x="349.5" y="75.0" width="2" height="4.0" fill="#3b4249" stroke="#ee7e3a" stroke-width="1"/>
<line x1="354.5" y1="69.0" x2="354.5" y2="83.0" stroke="#ee7e3a" stroke-width="1"/>
<rect x="353.5" y="70.4" width="2" height="6.3" fill="#f9aa6c" stroke="#ee7e3a" stroke-width="1"/>
<line x1="358.5" y1="60.0" x2="358.5" y2="70.0" stroke="#ee7e3a" stroke-width="1"/>
<rect x="357.5" y="66.4" width="2" height="2.4" fill="#f9aa6c" stroke="#ee7e3a" stroke-width="1"/>
<line x1="362.5" y1="64.0" x2="362.5" y2="80.0" stroke="#ee7e3a" stroke-width="1"/>
<rect x="361.5" y="65.5" width="2" height="9.5" fill="#3b4249" stroke="#ee7e3a" stroke-width="1"/>
<line x1="366.5" y1="70.0" x2="366.5" y2="76.0" stroke="#ee7e3a" stroke-width="1"/>
<rect x="365.5" y="72.0" width="2" height="2.4" fill="#3b4249" stroke="#ee7e3a" stroke-width="1"/>
<line x1="370.5" y1="67.0" x2="370.5" y2="72.0" stroke="#ee7e3a" stroke-width="1"/>
<rect x="369.5" y="68.5" width="2" height="2.4" fill="#f9aa6c" stroke="#ee7e3a" stroke-width="1"/>
<line x1="374.5" y1="66.0" x2="374.5" y2="71.0" stroke="#ee7e3a" stroke-width="1"/>
<rect x="373.5" y="67.1" width="2" height="2.4" fill="#3b4249" stroke="#ee7e3a" stroke-width="1"/>
<line x1="378.5" y1="69.0" x2="378.5" y2="82.0" stroke="#ee7e3a" stroke-width="1"/>
<rect x="377.5" y="70.4" width="2" height="10.4" fill="#3b4249" stroke="#ee7e3a" stroke-width="1"/>
<line x1="383.5" y1="78.0" x2="383.5" y2="83.6" stroke="#ee7e3a" stroke-width="1"/>
<rect x="382.5" y="79.6" width="2" height="2.4" fill="#3b4249" stroke="#ee7e3a" stroke-width="1"/>
<line x1="387.5" y1="79.0" x2="387.5" y2="88.0" stroke="#ee7e3a" stroke-width="1"/>
<rect x="386.5" y="80.0" width="2" height="5.7" fill="#3b4249" stroke="#ee7e3a" stroke-width="1"/>
<line x1="391.5" y1="78.0" x2="391.5" y2="86.0" stroke="#ee7e3a" stroke-width="1"/>
<rect x="390.5" y="79.4" width="2" height="5.6" fill="#f9aa6c" stroke="#ee7e3a" stroke-width="1"/>
<line x1="395.5" y1="76.0" x2="395.5" y2="82.0" stroke="#ee7e3a" stroke-width="1"/>
<rect x="394.5" y="78.2" width="2" height="2.4" fill="#3b4249" stroke="#ee7e3a" stroke-width="1"/>
<line x1="399.5" y1="72.0" x2="399.5" y2="82.0" stroke="#ee7e3a" stroke-width="1"/>
<rect x="398.5" y="75.5" width="2" height="2.4" fill="#3b4249" stroke="#ee7e3a" stroke-width="1"/>
<line x1="403.5" y1="74.0" x2="403.5" y2="91.0" stroke="#ee7e3a" stroke-width="1"/>
<rect x="402.5" y="75.3" width="2" height="9.7" fill="#3b4249" stroke="#ee7e3a" stroke-width="1"/>
<line x1="407.5" y1="66.0" x2="407.5" y2="86.0" stroke="#ee7e3a" stroke-width="1"/>
<rect x="406.5" y="69.0" width="2" height="15.3" fill="#f9aa6c" stroke="#ee7e3a" stroke-width="1"/>
<line x1="411.5" y1="57.0" x2="411.5" y2="72.0" stroke="#ee7e3a" stroke-width="1"/>
<rect x="410.5" y="59.3" width="2" height="9.0" fill="#f9aa6c" stroke="#ee7e3a" stroke-width="1"/>
<line x1="415.5" y1="50.0" x2="415.5" y2="62.0" stroke="#ee7e3a" stroke-width="1"/>
<rect x="414.5" y="58.1" width="2" height="2.4" fill="#3b4249" stroke="#ee7e3a" stroke-width="1"/>
<line x1="419.5" y1="53.0" x2="419.5" y2="62.0" stroke="#ee7e3a" stroke-width="1"/>
<rect x="418.5" y="55.8" width="2" height="3.5" fill="#f9aa6c" stroke="#ee7e3a" stroke-width="1"/>
<line x1="424.5" y1="50.0" x2="424.5" y2="58.0" stroke="#ee7e3a" stroke-width="1"/>
<rect x="423.5" y="52.4" width="2" height="4.8" fill="#3b4249" stroke="#ee7e3a" stroke-width="1"/>
<line x1="428.5" y1="49.0" x2="428.5" y2="62.0" stroke="#ee7e3a" stroke-width="1"/>
<rect x="427.5" y="54.4" width="2" height="2.1" fill="#3b4249" stroke="#ee7e3a" stroke-width="1"/>
<line x1="432.5" y1="46.0" x2="432.5" y2="60.0" stroke="#ee7e3a" stroke-width="1"/>
<rect x="431.5" y="53.8" width="2" height="2.4" fill="#f9aa6c" stroke="#ee7e3a" stroke-width="1"/>
<line x1="436.5" y1="50.0" x2="436.5" y2="66.0" stroke="#ee7e3a" stroke-width="1"/>
<rect x="435.5" y="51.7" width="2" height="11.1" fill="#3b4249" stroke="#ee7e3a" stroke-width="1"/>
<line x1="440.5" y1="51.0" x2="440.5" y2="64.0" stroke="#ee7e3a" stroke-width="1"/>
<rect x="439.5" y="53.8" width="2" height="8.2" fill="#f9aa6c" stroke="#ee7e3a" stroke-width="1"/>
<line x1="444.5" y1="50.0" x2="444.5" y2="58.0" stroke="#ee7e3a" stroke-width="1"/>
<rect x="443.5" y="52.5" width="2" height="2.4" fill="#3b4249" stroke="#ee7e3a" stroke-width="1"/>
<line x1="448.5" y1="51.0" x2="448.5" y2="59.0" stroke="#ee7e3a" stroke-width="1"/>
<rect x="447.5" y="54.4" width="2" height="2.1" fill="#3b4249" stroke="#ee7e3a" stroke-width="1"/>
<line x1="452.5" y1="52.0" x2="452.5" y2="65.0" stroke="#ee7e3a" stroke-width="1"/>
<rect x="451.5" y="55.8" width="2" height="8.4" fill="#3b4249" stroke="#ee7e3a" stroke-width="1"/>
<line x1="456.5" y1="65.0" x2="456.5" y2="78.0" stroke="#ee7e3a" stroke-width="1"/>
<rect x="455.5" y="67.0" width="2" height="6.2" fill="#3b4249" stroke="#ee7e3a" stroke-width="1"/>
<line x1="460.5" y1="71.0" x2="460.5" y2="87.0" stroke="#ee7e3a" stroke-width="1"/>
<rect x="459.5" y="72.5" width="2" height="11.8" fill="#3b4249" stroke="#ee7e3a" stroke-width="1"/>
<line x1="465.5" y1="80.0" x2="465.5" y2="88.0" stroke="#ee7e3a" stroke-width="1"/>
<rect x="464.5" y="81.0" width="2" height="2.4" fill="#3b4249" stroke="#ee7e3a" stroke-width="1"/>
<line x1="469.5" y1="76.0" x2="469.5" y2="86.0" stroke="#ee7e3a" stroke-width="1"/>
<rect x="468.5" y="80.8" width="2" height="2.8" fill="#f9aa6c" stroke="#ee7e3a" stroke-width="1"/>
<line x1="473.5" y1="78.0" x2="473.5" y2="86.0" stroke="#ee7e3a" stroke-width="1"/>
<rect x="472.5" y="79.4" width="2" height="4.9" fill="#3b4249" stroke="#ee7e3a" stroke-width="1"/>
<line x1="477.5" y1="72.0" x2="477.5" y2="86.0" stroke="#ee7e3a" stroke-width="1"/>
<rect x="476.5" y="81.0" width="2" height="2.4" fill="#3b4249" stroke="#ee7e3a" stroke-width="1"/>
<line x1="481.5" y1="79.0" x2="481.5" y2="91.0" stroke="#ee7e3a" stroke-width="1"/>
<rect x="480.5" y="78.8" width="2" height="2.4" fill="#f9aa6c" stroke="#ee7e3a" stroke-width="1"/>
<line x1="485.5" y1="76.0" x2="485.5" y2="86.0" stroke="#ee7e3a" stroke-width="1"/>
<rect x="484.5" y="76.8" width="2" height="2.4" fill="#3b4249" stroke="#ee7e3a" stroke-width="1"/>
<line x1="489.5" y1="75.0" x2="489.5" y2="86.0" stroke="#ee7e3a" stroke-width="1"/>
<rect x="488.5" y="80.0" width="2" height="4.3" fill="#3b4249" stroke="#ee7e3a" stroke-width="1"/>
<line x1="493.5" y1="77.4" x2="493.5" y2="86.4" stroke="#ee7e3a" stroke-width="1"/>
<rect x="492.5" y="80.8" width="2" height="2.4" fill="#3b4249" stroke="#ee7e3a" stroke-width="1"/>
<line x1="497.5" y1="78.0" x2="497.5" y2="88.0" stroke="#ee7e3a" stroke-width="1"/>
<rect x="496.5" y="81.0" width="2" height="2.4" fill="#3b4249" stroke="#ee7e3a" stroke-width="1"/>
<line x1="501.5" y1="78.0" x2="501.5" y2="92.0" stroke="#ee7e3a" stroke-width="1"/>
<rect x="500.5" y="80.8" width="2" height="2.8" fill="#3b4249" stroke="#ee7e3a" stroke-width="1"/>
<line x1="506.5" y1="81.0" x2="506.5" y2="91.0" stroke="#ee7e3a" stroke-width="1"/>
<rect x="505.5" y="83.6" width="2" height="2.8" fill="#3b4249" stroke="#ee7e3a" stroke-width="1"/>
<line x1="510.5" y1="85.0" x2="510.5" y2="113.0" stroke="#ee7e3a" stroke-width="1"/>
<rect x="509.5" y="86.0" width="2" height="25.4" fill="#3b4249" stroke="#ee7e3a" stroke-width="1"/>
<line x1="514.5" y1="105.0" x2="514.5" y2="113.0" stroke="#ee7e3a" stroke-width="1"/>
<rect x="513.5" y="107.7" width="2" height="2.4" fill="#3b4249" stroke="#ee7e3a" stroke-width="1"/>
<line x1="518.5" y1="108.0" x2="518.5" y2="113.0" stroke="#ee7e3a" stroke-width="1"/>
<rect x="517.5" y="109.4" width="2" height="2.4" fill="#f9aa6c" stroke="#ee7e3a" stroke-width="1"/>
<line x1="522.5" y1="110.0" x2="522.5" y2="115.0" stroke="#ee7e3a" stroke-width="1"/>
<rect x="521.5" y="111.1" width="2" height="2.4" fill="#3b4249" stroke="#ee7e3a" stroke-width="1"/>
<line x1="526.5" y1="99.0" x2="526.5" y2="118.0" stroke="#ee7e3a" stroke-width="1"/>
<rect x="525.5" y="105.5" width="2" height="6.8" fill="#f9aa6c" stroke="#ee7e3a" stroke-width="1"/>
<line x1="530.5" y1="102.0" x2="530.5" y2="121.0" stroke="#ee7e3a" stroke-width="1"/>
<rect x="529.5" y="103.8" width="2" height="16.1" fill="#3b4249" stroke="#ee7e3a" stroke-width="1"/>
<line x1="534.5" y1="118.0" x2="534.5" y2="130.0" stroke="#ee7e3a" stroke-width="1"/>
<rect x="533.5" y="119.0" width="2" height="7.7" fill="#3b4249" stroke="#ee7e3a" stroke-width="1"/>
<line x1="538.5" y1="121.0" x2="538.5" y2="127.0" stroke="#ee7e3a" stroke-width="1"/>
<rect x="537.5" y="122.8" width="2" height="2.4" fill="#f9aa6c" stroke="#ee7e3a" stroke-width="1"/>
<line x1="542.5" y1="119.0" x2="542.5" y2="130.0" stroke="#ee7e3a" stroke-width="1"/>
<rect x="541.5" y="123.8" width="2" height="2.4" fill="#3b4249" stroke="#ee7e3a" stroke-width="1"/>
<line x1="546.5" y1="123.0" x2="546.5" y2="132.0" stroke="#ee7e3a" stroke-width="1"/>
<rect x="545.5" y="124.5" width="2" height="5.5" fill="#3b4249" stroke="#ee7e3a" stroke-width="1"/>
<line x1="551.5" y1="128.0" x2="551.5" y2="136.0" stroke="#ee7e3a" stroke-width="1"/>
<rect x="550.5" y="129.8" width="2" height="2.4" fill="#3b4249" stroke="#ee7e3a" stroke-width="1"/>
<line x1="555.5" y1="128.0" x2="555.5" y2="138.0" stroke="#ee7e3a" stroke-width="1"/>
<rect x="554.5" y="129.8" width="2" height="2.4" fill="#f9aa6c" stroke="#ee7e3a" stroke-width="1"/>
<line x1="559.5" y1="127.0" x2="559.5" y2="148.0" stroke="#ee7e3a" stroke-width="1"/>
<rect x="558.5" y="128.4" width="2" height="18.6" fill="#3b4249" stroke="#ee7e3a" stroke-width="1"/>
<line x1="563.5" y1="142.0" x2="563.5" y2="147.0" stroke="#ee7e3a" stroke-width="1"/>
<rect x="562.5" y="143.3" width="2" height="2.4" fill="#f9aa6c" stroke="#ee7e3a" stroke-width="1"/>
<line x1="567.5" y1="141.0" x2="567.5" y2="151.0" stroke="#ee7e3a" stroke-width="1"/>
<rect x="566.5" y="142.8" width="2" height="6.8" fill="#3b4249" stroke="#ee7e3a" stroke-width="1"/>
<line x1="571.5" y1="140.0" x2="571.5" y2="150.0" stroke="#ee7e3a" stroke-width="1"/>
<rect x="570.5" y="144.2" width="2" height="2.4" fill="#3b4249" stroke="#ee7e3a" stroke-width="1"/>
<line x1="575.5" y1="139.0" x2="575.5" y2="148.0" stroke="#ee7e3a" stroke-width="1"/>
<rect x="574.5" y="140.3" width="2" height="6.7" fill="#f9aa6c" stroke="#ee7e3a" stroke-width="1"/>
<line x1="579.5" y1="142.0" x2="579.5" y2="152.0" stroke="#ee7e3a" stroke-width="1"/>
<rect x="578.5" y="143.7" width="2" height="6.8" fill="#3b4249" stroke="#ee7e3a" stroke-width="1"/>
<line x1="583.5" y1="148.0" x2="583.5" y2="159.0" stroke="#ee7e3a" stroke-width="1"/>
<rect x="582.5" y="149.6" width="2" height="8.4" fill="#3b4249" stroke="#ee7e3a" stroke-width="1"/>
<line x1="587.5" y1="155.0" x2="587.5" y2="167.0" stroke="#ee7e3a" stroke-width="1"/>
<rect x="586.5" y="156.4" width="2" height="9.3" fill="#3b4249" stroke="#ee7e3a" stroke-width="1"/>
<line x1="592.5" y1="163.0" x2="592.5" y2="175.0" stroke="#ee7e3a" stroke-width="1"/>
<rect x="591.5" y="164.9" width="2" height="8.5" fill="#3b4249" stroke="#ee7e3a" stroke-width="1"/>
<line x1="596.5" y1="167.0" x2="596.5" y2="182.0" stroke="#ee7e3a" stroke-width="1"/>
<rect x="595.5" y="169.0" width="2" height="9.5" fill="#3b4249" stroke="#ee7e3a" stroke-width="1"/>
<line x1="600.5" y1="163.0" x2="600.5" y2="183.0" stroke="#ee7e3a" stroke-width="1"/>
<rect x="599.5" y="166.6" width="2" height="11.0" fill="#f9aa6c" stroke="#ee7e3a" stroke-width="1"/>
<line x1="604.5" y1="152.0" x2="604.5" y2="172.0" stroke="#ee7e3a" stroke-width="1"/>
<rect x="603.5" y="159.0" width="2" height="6.0" fill="#f9aa6c" stroke="#ee7e3a" stroke-width="1"/>
<line x1="608.5" y1="153.0" x2="608.5" y2="172.0" stroke="#ee7e3a" stroke-width="1"/>
<rect x="607.5" y="157.2" width="2" height="9.4" fill="#3b4249" stroke="#ee7e3a" stroke-width="1"/>
<line x1="612.5" y1="163.0" x2="612.5" y2="169.0" stroke="#ee7e3a" stroke-width="1"/>
<rect x="611.5" y="165.4" width="2" height="2.4" fill="#f9aa6c" stroke="#ee7e3a" stroke-width="1"/>
<line x1="616.5" y1="165.0" x2="616.5" y2="171.0" stroke="#ee7e3a" stroke-width="1"/>
<rect x="615.5" y="167.1" width="2" height="2.4" fill="#3b4249" stroke="#ee7e3a" stroke-width="1"/>
<line x1="620.5" y1="155.0" x2="620.5" y2="172.0" stroke="#ee7e3a" stroke-width="1"/>
<rect x="619.5" y="160.6" width="2" height="7.7" fill="#f9aa6c" stroke="#ee7e3a" stroke-width="1"/>
<line x1="624.5" y1="154.0" x2="624.5" y2="170.0" stroke="#ee7e3a" stroke-width="1"/>
<rect x="623.5" y="159.8" width="2" height="8.5" fill="#3b4249" stroke="#ee7e3a" stroke-width="1"/>
<line x1="628.5" y1="166.0" x2="628.5" y2="186.0" stroke="#ee7e3a" stroke-width="1"/>
<rect x="627.5" y="167.4" width="2" height="17.0" fill="#3b4249" stroke="#ee7e3a" stroke-width="1"/>
<line x1="633.5" y1="173.0" x2="633.5" y2="190.0" stroke="#ee7e3a" stroke-width="1"/>
<rect x="632.5" y="181.5" width="2" height="2.4" fill="#3b4249" stroke="#ee7e3a" stroke-width="1"/>
<line x1="637.5" y1="176.0" x2="637.5" y2="184.0" stroke="#ee7e3a" stroke-width="1"/>
<rect x="636.5" y="177.6" width="2" height="4.3" fill="#f9aa6c" stroke="#ee7e3a" stroke-width="1"/>
<line x1="641.5" y1="171.7" x2="641.5" y2="181.9" stroke="#ee7e3a" stroke-width="1"/>
<rect x="640.5" y="176.8" width="2" height="2.4" fill="#3b4249" stroke="#ee7e3a" stroke-width="1"/>
<line x1="645.5" y1="174.0" x2="645.5" y2="179.0" stroke="#ee7e3a" stroke-width="1"/>
<rect x="644.5" y="175.6" width="2" height="2.4" fill="#f9aa6c" stroke="#ee7e3a" stroke-width="1"/>
<line x1="649.5" y1="177.0" x2="649.5" y2="190.0" stroke="#ee7e3a" stroke-width="1"/>
<rect x="648.5" y="178.5" width="2" height="10.2" fill="#3b4249" stroke="#ee7e3a" stroke-width="1"/>
<line x1="653.5" y1="177.0" x2="653.5" y2="190.0" stroke="#ee7e3a" stroke-width="1"/>
<rect x="652.5" y="178.5" width="2" height="9.5" fill="#f9aa6c" stroke="#ee7e3a" stroke-width="1"/>
<line x1="657.5" y1="177.0" x2="657.5" y2="199.0" stroke="#ee7e3a" stroke-width="1"/>
<rect x="656.5" y="178.4" width="2" height="19.5" fill="#3b4249" stroke="#ee7e3a" stroke-width="1"/>
<line x1="661.5" y1="195.0" x2="661.5" y2="206.0" stroke="#ee7e3a" stroke-width="1"/>
<rect x="660.5" y="197.0" width="2" height="4.3" fill="#3b4249" stroke="#ee7e3a" stroke-width="1"/>
<line x1="665.5" y1="197.0" x2="665.5" y2="204.7" stroke="#ee7e3a" stroke-width="1"/>
<rect x="664.5" y="198.8" width="2" height="2.4" fill="#3b4249" stroke="#ee7e3a" stroke-width="1"/>
<line x1="669.5" y1="194.5" x2="669.5" y2="203.0" stroke="#ee7e3a" stroke-width="1"/>
<rect x="668.5" y="196.8" width="2" height="2.4" fill="#f9aa6c" stroke="#ee7e3a" stroke-width="1"/>
<line x1="674.5" y1="189.0" x2="674.5" y2="201.0" stroke="#ee7e3a" stroke-width="1"/>
<rect x="673.5" y="193.7" width="2" height="5.1" fill="#f9aa6c" stroke="#ee7e3a" stroke-width="1"/>
<line x1="678.5" y1="188.0" x2="678.5" y2="203.0" stroke="#ee7e3a" stroke-width="1"/>
<rect x="677.5" y="192.8" width="2" height="6.8" fill="#3b4249" stroke="#ee7e3a" stroke-width="1"/>
<line x1="682.5" y1="197.0" x2="682.5" y2="211.0" stroke="#ee7e3a" stroke-width="1"/>
<rect x="681.5" y="198.8" width="2" height="8.4" fill="#3b4249" stroke="#ee7e3a" stroke-width="1"/>
<line x1="686.5" y1="203.0" x2="686.5" y2="219.0" stroke="#ee7e3a" stroke-width="1"/>
<rect x="685.5" y="204.7" width="2" height="12.7" fill="#3b4249" stroke="#ee7e3a" stroke-width="1"/>
<line x1="690.5" y1="213.0" x2="690.5" y2="225.0" stroke="#ee7e3a" stroke-width="1"/>
<rect x="689.5" y="217.4" width="2" height="3.4" fill="#3b4249" stroke="#ee7e3a" stroke-width="1"/>
<line x1="694.5" y1="218.0" x2="694.5" y2="232.0" stroke="#ee7e3a" stroke-width="1"/>
<rect x="693.5" y="219.0" width="2" height="10.3" fill="#3b4249" stroke="#ee7e3a" stroke-width="1"/>
<line x1="698.5" y1="216.0" x2="698.5" y2="234.0" stroke="#ee7e3a" stroke-width="1"/>
<rect x="697.5" y="224.2" width="2" height="3.4" fill="#f9aa6c" stroke="#ee7e3a" stroke-width="1"/>
<line x1="702.5" y1="210.0" x2="702.5" y2="226.0" stroke="#ee7e3a" stroke-width="1"/>
<rect x="701.5" y="215.7" width="2" height="7.7" fill="#f9aa6c" stroke="#ee7e3a" stroke-width="1"/>
<line x1="706.5" y1="192.0" x2="706.5" y2="219.0" stroke="#ee7e3a" stroke-width="1"/>
<rect x="705.5" y="198.8" width="2" height="16.1" fill="#f9aa6c" stroke="#ee7e3a" stroke-width="1"/>
<line x1="710.5" y1="187.0" x2="710.5" y2="201.0" stroke="#ee7e3a" stroke-width="1"/>
<rect x="709.5" y="192.0" width="2" height="5.0" fill="#f9aa6c" stroke="#ee7e3a" stroke-width="1"/>
<line x1="714.5" y1="183.0" x2="714.5" y2="197.0" stroke="#ee7e3a" stroke-width="1"/>
<rect x="713.5" y="188.6" width="2" height="6.8" fill="#f9aa6c" stroke="#ee7e3a" stroke-width="1"/>
<line x1="719.5" y1="184.0" x2="719.5" y2="194.0" stroke="#ee7e3a" stroke-width="1"/>
<rect x="718.5" y="187.0" width="2" height="3.3" fill="#f9aa6c" stroke="#ee7e3a" stroke-width="1"/>
<line x1="723.5" y1="173.0" x2="723.5" y2="191.0" stroke="#ee7e3a" stroke-width="1"/>
<rect x="722.5" y="181.0" width="2" height="8.4" fill="#f9aa6c" stroke="#ee7e3a" stroke-width="1"/>
<line x1="727.5" y1="158.0" x2="727.5" y2="185.0" stroke="#ee7e3a" stroke-width="1"/>
<rect x="726.5" y="161.4" width="2" height="18.6" fill="#f9aa6c" stroke="#ee7e3a" stroke-width="1"/>
<line x1="731.5" y1="149.0" x2="731.5" y2="172.0" stroke="#ee7e3a" stroke-width="1"/>
<rect x="730.5" y="160.6" width="2" height="9.4" fill="#3b4249" stroke="#ee7e3a" stroke-width="1"/>
<line x1="735.5" y1="169.0" x2="735.5" y2="181.0" stroke="#ee7e3a" stroke-width="1"/>
<rect x="734.5" y="170.0" width="2" height="9.2" fill="#3b4249" stroke="#ee7e3a" stroke-width="1"/>
<line x1="739.5" y1="169.0" x2="739.5" y2="181.0" stroke="#ee7e3a" stroke-width="1"/>
<rect x="738.5" y="174.0" width="2" height="2.7" fill="#3b4249" stroke="#ee7e3a" stroke-width="1"/>
<line x1="743.5" y1="172.0" x2="743.5" y2="181.0" stroke="#ee7e3a" stroke-width="1"/>
<rect x="742.5" y="173.3" width="2" height="5.9" fill="#3b4249" stroke="#ee7e3a" stroke-width="1"/>
<line x1="747.5" y1="173.0" x2="747.5" y2="190.0" stroke="#ee7e3a" stroke-width="1"/>
<rect x="746.5" y="178.4" width="2" height="6.8" fill="#3b4249" stroke="#ee7e3a" stroke-width="1"/>
<line x1="751.5" y1="182.6" x2="751.5" y2="194.5" stroke="#ee7e3a" stroke-width="1"/>
<rect x="750.5" y="185.8" width="2" height="2.4" fill="#f9aa6c" stroke="#ee7e3a" stroke-width="1"/>
<line x1="755.5" y1="178.0" x2="755.5" y2="191.0" stroke="#ee7e3a" stroke-width="1"/>
<rect x="754.5" y="185.2" width="2" height="3.4" fill="#3b4249" stroke="#ee7e3a" stroke-width="1"/>
<line x1="760.5" y1="188.0" x2="760.5" y2="200.0" stroke="#ee7e3a" stroke-width="1"/>
<rect x="759.5" y="189.4" width="2" height="9.4" fill="#3b4249" stroke="#ee7e3a" stroke-width="1"/>
<line x1="764.5" y1="193.0" x2="764.5" y2="204.0" stroke="#ee7e3a" stroke-width="1"/>
<rect x="763.5" y="197.6" width="2" height="2.4" fill="#f9aa6c" stroke="#ee7e3a" stroke-width="1"/>
<line x1="768.5" y1="197.0" x2="768.5" y2="205.0" stroke="#ee7e3a" stroke-width="1"/>
<rect x="767.5" y="198.8" width="2" height="4.2" fill="#3b4249" stroke="#ee7e3a" stroke-width="1"/>
<line x1="772.5" y1="201.0" x2="772.5" y2="213.0" stroke="#ee7e3a" stroke-width="1"/>
<rect x="771.5" y="202.0" width="2" height="9.5" fill="#3b4249" stroke="#ee7e3a" stroke-width="1"/>
<line x1="776.5" y1="210.0" x2="776.5" y2="231.0" stroke="#ee7e3a" stroke-width="1"/>
<rect x="775.5" y="211.5" width="2" height="15.3" fill="#3b4249" stroke="#ee7e3a" stroke-width="1"/>
<line x1="780.5" y1="218.0" x2="780.5" y2="235.0" stroke="#ee7e3a" stroke-width="1"/>
<rect x="779.5" y="225.6" width="2" height="2.4" fill="#3b4249" stroke="#ee7e3a" stroke-width="1"/>
<line x1="784.5" y1="215.0" x2="784.5" y2="229.0" stroke="#ee7e3a" stroke-width="1"/>
<rect x="783.5" y="220.8" width="2" height="5.2" fill="#f9aa6c" stroke="#ee7e3a" stroke-width="1"/>
<line x1="788.5" y1="217.0" x2="788.5" y2="224.0" stroke="#ee7e3a" stroke-width="1"/>
<rect x="787.5" y="219.0" width="2" height="2.7" fill="#3b4249" stroke="#ee7e3a" stroke-width="1"/>
<line x1="792.5" y1="217.4" x2="792.5" y2="223.4" stroke="#ee7e3a" stroke-width="1"/>
<rect x="791.5" y="218.8" width="2" height="2.4" fill="#f9aa6c" stroke="#ee7e3a" stroke-width="1"/>
<line x1="796.5" y1="209.0" x2="796.5" y2="228.5" stroke="#ee7e3a" stroke-width="1"/>
<rect x="795.5" y="216.8" width="2" height="2.4" fill="#3b4249" stroke="#ee7e3a" stroke-width="1"/>
<line x1="801.5" y1="210.0" x2="801.5" y2="224.0" stroke="#ee7e3a" stroke-width="1"/>
<rect x="800.5" y="212.3" width="2" height="7.7" fill="#f9aa6c" stroke="#ee7e3a" stroke-width="1"/>
<line x1="805.5" y1="199.6" x2="805.5" y2="219.0" stroke="#ee7e3a" stroke-width="1"/>
<rect x="804.5" y="210.8" width="2" height="2.4" fill="#3b4249" stroke="#ee7e3a" stroke-width="1"/>
<line x1="809.5" y1="210.0" x2="809.5" y2="217.0" stroke="#ee7e3a" stroke-width="1"/>
<rect x="808.5" y="211.5" width="2" height="3.4" fill="#3b4249" stroke="#ee7e3a" stroke-width="1"/>
<line x1="813.5" y1="208.0" x2="813.5" y2="218.0" stroke="#ee7e3a" stroke-width="1"/>
<rect x="812.5" y="211.5" width="2" height="2.5" fill="#f9aa6c" stroke="#ee7e3a" stroke-width="1"/>
<line x1="817.5" y1="195.8" x2="817.5" y2="210.6" stroke="#ee7e3a" stroke-width="1"/>
<rect x="816.5" y="206.0" width="2" height="3.0" fill="#f9aa6c" stroke="#ee7e3a" stroke-width="1"/>
<line x1="821.5" y1="193.0" x2="821.5" y2="212.0" stroke="#ee7e3a" stroke-width="1"/>
<rect x="820.5" y="200.0" width="2" height="2.5" fill="#f9aa6c" stroke="#ee7e3a" stroke-width="1"/>
<line x1="825.5" y1="187.0" x2="825.5" y2="207.0" stroke="#ee7e3a" stroke-width="1"/>
<rect x="824.5" y="198.7" width="2" height="3.8" fill="#3b4249" stroke="#ee7e3a" stroke-width="1"/>
<line x1="829.5" y1="186.0" x2="829.5" y2="205.0" stroke="#ee7e3a" stroke-width="1"/>
<rect x="828.5" y="193.0" width="2" height="9.5" fill="#f9aa6c" stroke="#ee7e3a" stroke-width="1"/>
<line x1="833.5" y1="190.0" x2="833.5" y2="203.0" stroke="#ee7e3a" stroke-width="1"/>
<rect x="832.5" y="193.0" width="2" height="9.5" fill="#3b4249" stroke="#ee7e3a" stroke-width="1"/>
<line x1="837.5" y1="198.0" x2="837.5" y2="205.0" stroke="#ee7e3a" stroke-width="1"/>
<rect x="836.5" y="200.1" width="2" height="2.0" fill="#3b4249" stroke="#ee7e3a" stroke-width="1"/>
<line x1="842.5" y1="195.0" x2="842.5" y2="204.0" stroke="#ee7e3a" stroke-width="1"/>
<rect x="841.5" y="198.2" width="2" height="1.8" fill="#f9aa6c" stroke="#ee7e3a" stroke-width="1"/>
<line x1="846.5" y1="184.0" x2="846.5" y2="201.0" stroke="#ee7e3a" stroke-width="1"/>
<rect x="845.5" y="188.2" width="2" height="9.5" fill="#f9aa6c" stroke="#ee7e3a" stroke-width="1"/>
<line x1="850.5" y1="173.0" x2="850.5" y2="189.0" stroke="#ee7e3a" stroke-width="1"/>
<rect x="849.5" y="183.0" width="2" height="3.7" fill="#f9aa6c" stroke="#ee7e3a" stroke-width="1"/>
<line x1="854.5" y1="180.0" x2="854.5" y2="196.0" stroke="#ee7e3a" stroke-width="1"/>
<rect x="853.5" y="182.0" width="2" height="9.5" fill="#3b4249" stroke="#ee7e3a" stroke-width="1"/>
<line x1="858.5" y1="187.0" x2="858.5" y2="194.0" stroke="#ee7e3a" stroke-width="1"/>
<rect x="857.5" y="189.0" width="2" height="3.0" fill="#3b4249" stroke="#ee7e3a" stroke-width="1"/>
<line x1="862.5" y1="181.0" x2="862.5" y2="190.0" stroke="#ee7e3a" stroke-width="1"/>
<rect x="861.5" y="183.9" width="2" height="3.8" fill="#f9aa6c" stroke="#ee7e3a" stroke-width="1"/>
<line x1="866.5" y1="181.0" x2="866.5" y2="190.0" stroke="#ee7e3a" stroke-width="1"/>
<rect x="865.5" y="182.4" width="2" height="6.6" fill="#3b4249" stroke="#ee7e3a" stroke-width="1"/>
</g>
<polyline points="19.0,30.0 150.0,34.0 230.0,46.0 262.0,52.6 286.0,54.4 295.5,59.0 306.7,60.7 323.3,63.5 348.3,64.9 351.0,66.2 378.9,67.2 400.0,68.3 413.0,68.3 431.0,67.0 453.0,66.7 461.7,67.2 483.9,69.0 503.3,71.8 510.3,73.2 520.0,76.7 533.9,80.8 552.0,88.5 567.8,95.3 593.3,108.0 603.5,113.1 627.2,123.3 640.8,129.2 655.0,136.8 672.0,145.3 689.0,153.8 702.5,162.3 716.0,165.7 731.4,166.5 745.0,167.4 757.0,169.0 774.0,175.0 791.0,181.8 800.0,184.8 809.3,186.7 817.0,188.2 836.0,189.5" fill="none" stroke="#ad2a2a" stroke-width="1.4"/>
<polyline points="19.0,40.0 120.0,36.0 200.0,40.0 227.0,53.2 240.0,58.6 256.7,60.7 263.6,62.8 280.3,63.5 285.8,66.2 306.7,75.3 317.8,76.0 337.2,75.3 351.0,74.6 358.0,72.5 373.3,73.2 378.9,74.6 392.8,76.0 400.0,76.2 407.5,76.0 413.0,72.5 429.7,68.3 442.2,64.9 456.0,64.9 464.4,68.3 472.8,69.7 492.2,74.6 506.0,76.7 511.7,79.4 527.0,89.2 542.2,98.9 568.0,118.0 597.0,138.6 617.0,148.0 641.0,160.0 658.0,168.0 672.0,177.5 689.0,188.6 702.5,197.0 712.7,197.0 726.3,191.0 740.0,186.0 753.5,186.0 765.4,189.4 777.2,197.0 790.8,203.9 802.7,206.4 825.6,206.8 841.8,204.4 852.3,200.6 865.7,196.8" fill="none" stroke="#1c1ca2" stroke-width="1.5"/>
<rect x="19.5" y="170" width="883.0" height="2" fill="#b52e30"/>
<rect x="19.5" y="190" width="883.0" height="1.25" fill="#dfe1e5"/>
<rect x="19.5" y="204" width="883.0" height="1" fill="#23a023"/><rect x="19.5" y="205" width="883.0" height="1" fill="#3ccc3c"/>
<rect x="24" y="40.5" width="132" height="13" fill="#3b4249"/>
<rect x="159" y="40.5" width="136" height="13" fill="#3b4249"/>
<text x="21.9" y="50.8" font-size="11.5" fill="#2020d8" textLength="135.1" lengthAdjust="spacingAndGlyphs">Exponential_Moving_Average</text>
<text x="159" y="50.8" font-size="11.5" fill="#d42828" textLength="136" lengthAdjust="spacingAndGlyphs">Exponential_Moving_Average</text>
</g>
<rect x="19" y="39" width="884" height="1" fill="#b7c4d2"/>
<rect x="50" y="38.5" width="36" height="2" fill="#c9b8a8"/>
<rect x="87" y="38.5" width="19" height="2" fill="#c42a2a"/>
<rect x="118" y="38.5" width="8" height="2" fill="#c42a2a"/>
<rect x="127" y="38.5" width="4" height="2" fill="#1e1ecc"/>
<rect x="136" y="38.5" width="28" height="2" fill="#c42a2a"/>
<rect x="19" y="39" width="31" height="22" fill="#f0f0f0"/><rect x="19" y="39" width="31" height="5" fill="#c9c9c9"/>
<rect x="23" y="47" width="10" height="10" rx="2" fill="url(#lr)" stroke="#8a1a1a" stroke-width="0.9"/>
<rect x="36" y="47" width="10" height="10" rx="2" fill="url(#lb)" stroke="#1a5080" stroke-width="0.9"/>
<rect x="19.5" y="39.5" width="883.0" height="211.0" fill="none" stroke="#b7c4d2" stroke-width="1"/>
<rect x="19.5" y="256.5" width="883.0" height="65.0" fill="none" stroke="#b7c4d2" stroke-width="1"/>
<rect x="19.5" y="327.5" width="883.0" height="74.0" fill="none" stroke="#b7c4d2" stroke-width="1"/>
<line x1="902" y1="79.5" x2="906" y2="79.5" stroke="#b7c4d2" stroke-width="1"/>
<text x="909.5" y="85.5" font-size="11" fill="#f4f4f4">0.9400</text>
<line x1="902" y1="123.5" x2="906" y2="123.5" stroke="#b7c4d2" stroke-width="1"/>
<text x="909.5" y="129.5" font-size="11" fill="#f4f4f4">0.9300</text>
<line x1="902" y1="168.5" x2="906" y2="168.5" stroke="#b7c4d2" stroke-width="1"/>
<text x="909.5" y="174.5" font-size="11" fill="#f4f4f4">0.9200</text>
<line x1="902" y1="213.5" x2="906" y2="213.5" stroke="#b7c4d2" stroke-width="1"/>
<text x="909.5" y="219.5" font-size="11" fill="#f4f4f4">0.9100</text>
<rect x="902" y="180" width="48" height="21" fill="#ffffff"/>
<text x="911" y="194.5" font-size="11" fill="#3a3f48">0.9152</text>
<g clip-path="url(#cc)">
<g shape-rendering="crispEdges">
<rect x="26.0" y="274.5" width="2" height="5.0" fill="#c02a30"/>
<rect x="30.0" y="274.5" width="2" height="4.2" fill="#c02a30"/>
<rect x="34.0" y="274.5" width="2" height="3.5" fill="#c02a30"/>
<rect x="38.0" y="274.5" width="2" height="1.6" fill="#c02a30"/>
<rect x="47.0" y="272.7" width="2" height="1.8" fill="#c02a30"/>
<rect x="51.0" y="271.9" width="2" height="2.6" fill="#c02a30"/>
<rect x="55.0" y="271.2" width="2" height="3.3" fill="#c02a30"/>
<rect x="59.0" y="270.7" width="2" height="3.8" fill="#c02a30"/>
<rect x="63.0" y="270.3" width="2" height="4.2" fill="#c02a30"/>
<rect x="67.0" y="270.8" width="2" height="3.7" fill="#c02a30"/>
<rect x="71.0" y="271.3" width="2" height="3.2" fill="#c02a30"/>
<rect x="75.0" y="272.2" width="2" height="2.3" fill="#c02a30"/>
<rect x="79.0" y="272.6" width="2" height="1.9" fill="#c02a30"/>
<rect x="83.0" y="272.6" width="2" height="1.9" fill="#c02a30"/>
<rect x="88.0" y="272.6" width="2" height="1.9" fill="#c02a30"/>
<rect x="92.0" y="272.6" width="2" height="1.9" fill="#c02a30"/>
<rect x="96.0" y="272.5" width="2" height="2.0" fill="#c02a30"/>
<rect x="100.0" y="272.4" width="2" height="2.1" fill="#c02a30"/>
<rect x="104.0" y="272.3" width="2" height="2.2" fill="#c02a30"/>
<rect x="108.0" y="272.2" width="2" height="2.3" fill="#c02a30"/>
<rect x="112.0" y="272.1" width="2" height="2.4" fill="#c02a30"/>
<rect x="116.0" y="271.1" width="2" height="3.4" fill="#c02a30"/>
<rect x="120.0" y="270.0" width="2" height="4.5" fill="#c02a30"/>
<rect x="124.0" y="268.9" width="2" height="5.6" fill="#c02a30"/>
<rect x="129.0" y="268.5" width="2" height="6.0" fill="#c02a30"/>
<rect x="133.0" y="268.7" width="2" height="5.8" fill="#c02a30"/>
<rect x="137.0" y="269.4" width="2" height="5.1" fill="#c02a30"/>
<rect x="141.0" y="271.0" width="2" height="3.5" fill="#c02a30"/>
<rect x="145.0" y="272.9" width="2" height="1.6" fill="#c02a30"/>
<rect x="149.0" y="274.5" width="2" height="1.6" fill="#c02a30"/>
<rect x="153.0" y="274.5" width="2" height="2.8" fill="#c02a30"/>
<rect x="157.0" y="274.5" width="2" height="3.7" fill="#c02a30"/>
<rect x="161.0" y="274.5" width="2" height="3.8" fill="#c02a30"/>
<rect x="165.0" y="274.5" width="2" height="4.2" fill="#c02a30"/>
<rect x="170.0" y="274.5" width="2" height="4.1" fill="#c02a30"/>
<rect x="174.0" y="274.5" width="2" height="3.9" fill="#c02a30"/>
<rect x="178.0" y="274.5" width="2" height="4.8" fill="#c02a30"/>
<rect x="182.0" y="274.5" width="2" height="6.0" fill="#c02a30"/>
<rect x="186.0" y="274.5" width="2" height="5.5" fill="#c02a30"/>
<rect x="190.0" y="274.5" width="2" height="4.4" fill="#c02a30"/>
<rect x="194.0" y="274.5" width="2" height="3.6" fill="#c02a30"/>
<rect x="198.0" y="274.5" width="2" height="1.8" fill="#c02a30"/>
<rect x="210.0" y="272.9" width="2" height="1.6" fill="#c02a30"/>
<rect x="215.0" y="272.8" width="2" height="1.7" fill="#c02a30"/>
<rect x="227.0" y="274.5" width="2" height="1.6" fill="#c02a30"/>
<rect x="231.0" y="274.5" width="2" height="3.4" fill="#c02a30"/>
<rect x="235.0" y="274.5" width="2" height="4.9" fill="#c02a30"/>
<rect x="239.0" y="274.5" width="2" height="5.2" fill="#c02a30"/>
<rect x="243.0" y="274.5" width="2" height="3.9" fill="#c02a30"/>
<rect x="247.0" y="274.5" width="2" height="3.7" fill="#c02a30"/>
<rect x="251.0" y="274.5" width="2" height="2.7" fill="#c02a30"/>
<rect x="256.0" y="274.5" width="2" height="1.6" fill="#c02a30"/>
<rect x="268.0" y="272.9" width="2" height="1.6" fill="#c02a30"/>
<rect x="272.0" y="272.5" width="2" height="2.0" fill="#c02a30"/>
<rect x="276.0" y="272.5" width="2" height="2.0" fill="#c02a30"/>
<rect x="280.0" y="272.7" width="2" height="1.8" fill="#c02a30"/>
<rect x="284.0" y="272.9" width="2" height="1.6" fill="#c02a30"/>
<rect x="292.0" y="274.5" width="2" height="1.9" fill="#c02a30"/>
<rect x="297.0" y="274.5" width="2" height="2.7" fill="#c02a30"/>
<rect x="301.0" y="274.5" width="2" height="3.5" fill="#c02a30"/>
<rect x="305.0" y="274.5" width="2" height="3.8" fill="#c02a30"/>
<rect x="309.0" y="274.5" width="2" height="2.2" fill="#c02a30"/>
<rect x="317.0" y="272.7" width="2" height="1.8" fill="#c02a30"/>
<rect x="321.0" y="270.2" width="2" height="4.3" fill="#c02a30"/>
<rect x="325.0" y="269.6" width="2" height="4.9" fill="#c02a30"/>
<rect x="329.0" y="269.3" width="2" height="5.2" fill="#c02a30"/>
<rect x="333.0" y="270.0" width="2" height="4.5" fill="#c02a30"/>
<rect x="338.0" y="270.7" width="2" height="3.8" fill="#c02a30"/>
<rect x="342.0" y="270.7" width="2" height="3.8" fill="#c02a30"/>
<rect x="346.0" y="270.9" width="2" height="3.6" fill="#c02a30"/>
<rect x="350.0" y="271.9" width="2" height="2.6" fill="#c02a30"/>
<rect x="354.0" y="270.4" width="2" height="4.1" fill="#c02a30"/>
<rect x="358.0" y="270.7" width="2" height="3.8" fill="#c02a30"/>
<rect x="362.0" y="271.0" width="2" height="3.5" fill="#c02a30"/>
<rect x="366.0" y="271.2" width="2" height="3.3" fill="#c02a30"/>
<rect x="370.0" y="270.7" width="2" height="3.8" fill="#c02a30"/>
<rect x="374.0" y="271.8" width="2" height="2.7" fill="#c02a30"/>
<rect x="378.0" y="272.7" width="2" height="1.8" fill="#c02a30"/>
<rect x="383.0" y="272.9" width="2" height="1.6" fill="#c02a30"/>
<rect x="395.0" y="272.9" width="2" height="1.6" fill="#c02a30"/>
<rect x="399.0" y="272.9" width="2" height="1.6" fill="#c02a30"/>
<rect x="403.0" y="272.9" width="2" height="1.6" fill="#c02a30"/>
<rect x="407.0" y="272.8" width="2" height="1.7" fill="#c02a30"/>
<rect x="411.0" y="271.4" width="2" height="3.1" fill="#c02a30"/>
<rect x="415.0" y="270.0" width="2" height="4.5" fill="#c02a30"/>
<rect x="419.0" y="269.3" width="2" height="5.2" fill="#c02a30"/>
<rect x="424.0" y="269.3" width="2" height="5.2" fill="#c02a30"/>
<rect x="428.0" y="269.6" width="2" height="4.9" fill="#c02a30"/>
<rect x="432.0" y="270.7" width="2" height="3.8" fill="#c02a30"/>
<rect x="436.0" y="271.0" width="2" height="3.5" fill="#c02a30"/>
<rect x="440.0" y="271.6" width="2" height="2.9" fill="#c02a30"/>
<rect x="444.0" y="272.4" width="2" height="2.1" fill="#c02a30"/>
<rect x="448.0" y="272.7" width="2" height="1.8" fill="#c02a30"/>
<rect x="452.0" y="272.9" width="2" height="1.6" fill="#c02a30"/>
<rect x="456.0" y="274.5" width="2" height="1.6" fill="#c02a30"/>
<rect x="460.0" y="274.5" width="2" height="4.4" fill="#c02a30"/>
<rect x="465.0" y="274.5" width="2" height="7.3" fill="#c02a30"/>
<rect x="469.0" y="274.5" width="2" height="7.7" fill="#c02a30"/>
<rect x="473.0" y="274.5" width="2" height="8.1" fill="#c02a30"/>
<rect x="477.0" y="274.5" width="2" height="8.0" fill="#c02a30"/>
<rect x="481.0" y="274.5" width="2" height="7.8" fill="#c02a30"/>
<rect x="485.0" y="274.5" width="2" height="7.3" fill="#c02a30"/>
<rect x="489.0" y="274.5" width="2" height="5.0" fill="#c02a30"/>
<rect x="493.0" y="274.5" width="2" height="3.2" fill="#c02a30"/>
<rect x="497.0" y="274.5" width="2" height="2.1" fill="#c02a30"/>
<rect x="501.0" y="274.5" width="2" height="2.0" fill="#c02a30"/>
<rect x="506.0" y="274.5" width="2" height="1.9" fill="#c02a30"/>
<rect x="510.0" y="274.5" width="2" height="3.7" fill="#c02a30"/>
<rect x="514.0" y="274.5" width="2" height="5.3" fill="#c02a30"/>
<rect x="518.0" y="274.5" width="2" height="6.7" fill="#c02a30"/>
<rect x="522.0" y="274.5" width="2" height="7.0" fill="#c02a30"/>
<rect x="526.0" y="274.5" width="2" height="6.2" fill="#c02a30"/>
<rect x="530.0" y="274.5" width="2" height="6.3" fill="#c02a30"/>
<rect x="534.0" y="274.5" width="2" height="6.8" fill="#c02a30"/>
<rect x="538.0" y="274.5" width="2" height="6.9" fill="#c02a30"/>
<rect x="542.0" y="274.5" width="2" height="6.6" fill="#c02a30"/>
<rect x="546.0" y="274.5" width="2" height="6.3" fill="#c02a30"/>
<rect x="551.0" y="274.5" width="2" height="5.5" fill="#c02a30"/>
<rect x="555.0" y="274.5" width="2" height="4.6" fill="#c02a30"/>
<rect x="559.0" y="274.5" width="2" height="3.9" fill="#c02a30"/>
<rect x="563.0" y="274.5" width="2" height="4.5" fill="#c02a30"/>
<rect x="567.0" y="274.5" width="2" height="5.1" fill="#c02a30"/>
<rect x="571.0" y="274.5" width="2" height="4.1" fill="#c02a30"/>
<rect x="575.0" y="274.5" width="2" height="2.6" fill="#c02a30"/>
<rect x="579.0" y="274.5" width="2" height="2.3" fill="#c02a30"/>
<rect x="583.0" y="274.5" width="2" height="2.6" fill="#c02a30"/>
<rect x="587.0" y="274.5" width="2" height="4.0" fill="#c02a30"/>
<rect x="592.0" y="274.5" width="2" height="5.0" fill="#c02a30"/>
<rect x="596.0" y="274.5" width="2" height="3.0" fill="#c02a30"/>
<rect x="600.0" y="274.5" width="2" height="1.6" fill="#c02a30"/>
<rect x="608.0" y="272.9" width="2" height="1.6" fill="#c02a30"/>
<rect x="612.0" y="271.8" width="2" height="2.7" fill="#c02a30"/>
<rect x="616.0" y="271.5" width="2" height="3.0" fill="#c02a30"/>
<rect x="620.0" y="271.9" width="2" height="2.6" fill="#c02a30"/>
<rect x="624.0" y="272.1" width="2" height="2.4" fill="#c02a30"/>
<rect x="628.0" y="272.1" width="2" height="2.4" fill="#c02a30"/>
<rect x="633.0" y="272.1" width="2" height="2.4" fill="#c02a30"/>
<rect x="637.0" y="272.0" width="2" height="2.5" fill="#c02a30"/>
<rect x="641.0" y="271.7" width="2" height="2.8" fill="#c02a30"/>
<rect x="645.0" y="272.6" width="2" height="1.9" fill="#c02a30"/>
<rect x="649.0" y="272.6" width="2" height="1.9" fill="#c02a30"/>
<rect x="653.0" y="272.7" width="2" height="1.8" fill="#c02a30"/>
<rect x="657.0" y="272.7" width="2" height="1.8" fill="#c02a30"/>
<rect x="665.0" y="274.5" width="2" height="1.6" fill="#c02a30"/>
<rect x="669.0" y="274.5" width="2" height="1.7" fill="#c02a30"/>
<rect x="674.0" y="274.5" width="2" height="1.6" fill="#c02a30"/>
<rect x="678.0" y="274.5" width="2" height="1.6" fill="#c02a30"/>
<rect x="682.0" y="274.5" width="2" height="1.6" fill="#c02a30"/>
<rect x="686.0" y="274.5" width="2" height="1.6" fill="#c02a30"/>
<rect x="690.0" y="274.5" width="2" height="3.7" fill="#c02a30"/>
<rect x="694.0" y="274.5" width="2" height="3.9" fill="#c02a30"/>
<rect x="698.0" y="274.5" width="2" height="3.0" fill="#c02a30"/>
<rect x="702.0" y="274.5" width="2" height="2.1" fill="#c02a30"/>
<rect x="706.0" y="272.9" width="2" height="1.6" fill="#c02a30"/>
<rect x="710.0" y="269.6" width="2" height="4.9" fill="#c02a30"/>
<rect x="714.0" y="265.8" width="2" height="8.7" fill="#c02a30"/>
<rect x="719.0" y="264.8" width="2" height="9.7" fill="#c02a30"/>
<rect x="723.0" y="262.5" width="2" height="12.0" fill="#c02a30"/>
<rect x="727.0" y="260.4" width="2" height="14.1" fill="#c02a30"/>
<rect x="731.0" y="259.5" width="2" height="15.0" fill="#c02a30"/>
<rect x="735.0" y="261.4" width="2" height="13.1" fill="#c02a30"/>
<rect x="739.0" y="262.5" width="2" height="12.0" fill="#c02a30"/>
<rect x="743.0" y="263.8" width="2" height="10.7" fill="#c02a30"/>
<rect x="747.0" y="266.7" width="2" height="7.8" fill="#c02a30"/>
<rect x="751.0" y="269.3" width="2" height="5.2" fill="#c02a30"/>
<rect x="755.0" y="271.3" width="2" height="3.2" fill="#c02a30"/>
<rect x="760.0" y="272.9" width="2" height="1.6" fill="#c02a30"/>
<rect x="768.0" y="274.5" width="2" height="2.2" fill="#c02a30"/>
<rect x="772.0" y="274.5" width="2" height="3.1" fill="#c02a30"/>
<rect x="776.0" y="274.5" width="2" height="5.1" fill="#c02a30"/>
<rect x="780.0" y="274.5" width="2" height="7.2" fill="#c02a30"/>
<rect x="784.0" y="274.5" width="2" height="7.2" fill="#c02a30"/>
<rect x="788.0" y="274.5" width="2" height="6.9" fill="#c02a30"/>
<rect x="792.0" y="274.5" width="2" height="6.5" fill="#c02a30"/>
<rect x="796.0" y="274.5" width="2" height="4.6" fill="#c02a30"/>
<rect x="801.0" y="274.5" width="2" height="2.7" fill="#c02a30"/>
<rect x="809.0" y="272.9" width="2" height="1.6" fill="#c02a30"/>
<rect x="813.0" y="271.8" width="2" height="2.7" fill="#c02a30"/>
<rect x="817.0" y="270.4" width="2" height="4.1" fill="#c02a30"/>
<rect x="821.0" y="269.6" width="2" height="4.9" fill="#c02a30"/>
<rect x="825.0" y="269.7" width="2" height="4.8" fill="#c02a30"/>
<rect x="829.0" y="269.1" width="2" height="5.4" fill="#c02a30"/>
<rect x="833.0" y="268.4" width="2" height="6.1" fill="#c02a30"/>
<rect x="837.0" y="268.5" width="2" height="6.0" fill="#c02a30"/>
<rect x="842.0" y="268.4" width="2" height="6.1" fill="#c02a30"/>
<rect x="846.0" y="268.5" width="2" height="6.0" fill="#c02a30"/>
<rect x="850.0" y="268.8" width="2" height="5.7" fill="#c02a30"/>
<rect x="854.0" y="268.8" width="2" height="5.7" fill="#c02a30"/>
<rect x="858.0" y="268.9" width="2" height="5.6" fill="#c02a30"/>
<rect x="862.0" y="269.0" width="2" height="5.5" fill="#c02a30"/>
<rect x="866.0" y="269.2" width="2" height="5.3" fill="#c02a30"/>
</g>
<polyline points="19.0,287.7 25.2,288.7 33.6,289.8 39.8,286.6 48.2,283.5 55.5,280.4 62.8,276.8 71.0,275.2 77.3,274.7 112.8,274.7 119.0,271.5 124.2,268.4 131.5,266.3 139.2,266.3 145.4,270.0 150.6,273.1 161.0,276.8 166.2,278.8 174.6,280.4 182.9,284.6 195.4,284.9 199.6,282.5 212.1,280.4 217.3,281.4 226.7,284.0 234.0,288.7 239.2,290.8 247.5,290.8 255.2,289.2 265.6,286.6 272.9,284.6 284.4,284.9 291.7,288.7 297.9,291.9 304.2,293.4 312.5,292.4 321.9,286.1 329.2,283.0 337.5,280.9 345.8,278.8 350.0,280.4 358.3,276.8 370.0,274.7 375.4,276.8 385.8,278.3 406.7,277.8 417.0,270.5 427.5,265.8 437.9,264.5 451.5,264.8 456.7,267.9 464.0,276.2 474.4,280.4 485.0,283.0 495.6,282.6 507.1,284.7 517.5,294.0 521.7,296.6 527.9,297.7 536.2,302.4 542.5,304.5 548.8,306.5 559.2,308.1 568.5,312.8 575.8,310.7 582.1,311.2 592.5,317.0 601.2,315.9 611.7,312.8 622.1,308.1 636.7,308.1 645.0,306.5 657.5,306.5 668.0,310.2 686.7,309.7 695.0,314.9 703.3,312.8 708.5,306.5 714.2,297.6 720.4,292.4 725.6,285.1 730.8,277.8 737.1,274.7 743.3,272.6 753.8,274.7 764.2,278.3 772.5,284.0 780.8,292.4 791.2,296.5 801.7,294.5 813.5,289.1 822.6,284.2 831.6,279.2 837.9,277.4 845.1,274.2 854.2,270.6 865.0,266.6" fill="none" stroke="#1f8a2a" stroke-width="1.2"/>
<polyline points="19.0,280.4 24.2,282.5 29.4,284.6 39.8,286.6 46.0,286.1 55.5,284.0 62.8,281.4 71.0,278.8 77.3,276.8 92.0,276.8 112.8,277.3 118.0,276.2 123.2,274.7 139.0,271.5 155.8,271.0 164.2,273.6 176.7,276.8 187.1,278.8 193.3,280.9 201.7,281.4 216.2,283.0 220.4,280.9 223.5,283.0 234.0,283.5 239.2,285.0 243.3,286.6 255.0,287.2 291.7,286.6 295.8,288.7 307.3,289.2 310.4,290.8 321.9,291.1 329.2,288.7 337.5,285.0 345.8,283.0 354.2,283.0 358.3,280.9 366.7,278.8 375.4,279.4 385.8,278.8 406.7,279.4 419.2,275.2 431.7,269.5 444.2,266.9 456.7,266.3 464.0,268.4 474.4,271.5 485.0,274.7 490.4,277.9 496.7,280.5 509.2,283.1 521.7,288.8 532.1,293.0 544.6,298.2 555.0,302.4 568.5,307.1 580.0,308.6 589.4,310.2 600.2,314.9 613.8,315.4 622.1,310.7 640.8,310.7 644.0,308.6 690.8,308.1 695.0,310.7 705.4,310.7 710.0,309.0 716.2,305.9 725.6,299.7 736.0,289.2 745.4,283.0 753.8,278.8 768.3,278.8 777.7,283.0 789.2,288.2 797.5,290.8 805.4,292.3 811.7,292.3 819.9,291.0 827.0,286.9 836.1,284.6 841.5,282.4 850.5,278.3 859.6,274.7 865.0,272.4" fill="none" stroke="#d02626" stroke-width="1.4"/>
</g>
<rect x="21" y="259" width="30" height="12" fill="#3b4249"/>
<text x="22" y="267.8" font-size="10" fill="#1f8a2a" textLength="27" lengthAdjust="spacingAndGlyphs">MACD</text>
<line x1="902" y1="274.5" x2="906" y2="274.5" stroke="#b7c4d2" stroke-width="1"/>
<text x="911.5" y="280.5" font-size="11" fill="#f4f4f4">+0.000</text>
<g clip-path="url(#cr)">
<g clip-path="url(#rsiabove)"><polygon points="19.5,382.7 19.5,375.0 27.5,376.0 34.8,374.6 38.3,355.8 43.1,358.8 48.3,354.2 56.7,351.0 64.0,346.9 68.1,355.8 72.3,352.0 75.4,352.0 84.8,362.5 87.9,357.3 92.1,360.4 96.2,353.0 102.5,359.4 107.7,363.5 112.5,369.8 116.7,338.5 120.2,344.8 123.3,342.7 133.8,342.7 136.9,349.0 141.0,362.5 148.3,361.5 158.8,364.6 161.9,358.3 166.0,366.7 177.5,366.7 182.7,377.0 190.0,360.4 194.2,363.5 198.3,361.5 202.5,361.5 208.8,358.3 212.9,360.4 216.0,364.6 220.2,362.5 229.6,374.0 231.7,375.0 235.8,382.3 240.0,371.9 244.2,367.7 248.3,369.8 250.0,366.7 255.8,356.2 261.5,365.6 264.6,366.7 271.9,360.4 283.3,366.7 288.5,378.8 292.7,374.6 296.9,374.6 301.0,379.6 305.2,370.8 309.4,372.9 313.5,361.5 317.7,360.4 325.0,354.6 331.2,354.6 338.5,358.3 342.7,353.0 346.9,360.4 351.0,362.0 358.3,349.6 362.5,360.4 370.8,352.0 375.0,354.2 379.2,362.9 383.3,362.9 387.5,367.7 391.7,359.4 397.9,357.3 404.2,366.7 410.4,343.8 414.6,344.8 420.8,341.2 429.2,342.0 432.3,341.2 436.5,351.0 440.6,343.3 447.9,346.9 453.1,359.4 460.4,371.2 468.8,365.6 472.9,369.2 477.1,366.7 485.4,363.8 490.2,368.3 497.5,364.2 505.8,369.8 510.0,386.5 515.2,384.4 521.5,386.5 526.7,374.6 530.8,383.3 536.0,386.5 540.2,385.4 547.5,387.9 554.8,385.4 559.0,393.3 563.1,389.6 567.3,392.0 575.6,383.3 585.0,391.7 596.5,397.9 600.6,382.3 604.2,374.6 610.0,379.2 616.2,379.6 620.4,371.2 624.6,375.0 628.8,383.3 631.9,381.2 639.2,375.0 644.4,375.4 649.6,381.2 653.8,371.2 657.9,379.6 661.0,381.2 668.3,380.2 673.5,373.3 682.9,379.6 686.0,385.4 694.4,389.6 698.5,383.3 707.9,360.4 714.2,354.2 719.2,355.8 723.3,350.0 727.5,339.6 731.7,347.9 735.8,351.7 739.0,349.6 743.1,352.0 747.3,357.3 751.5,357.3 759.8,364.6 765.0,365.0 769.2,368.8 775.4,380.2 778.5,379.2 784.8,373.3 789.0,374.6 795.2,372.9 800.4,364.6 805.6,364.2 809.8,366.2 817.1,355.2 821.2,352.0 825.4,355.8 829.2,347.5 833.3,355.8 837.9,355.2 846.2,342.7 850.4,341.7 854.6,350.4 861.9,344.8 865.4,349.0 865.4,382.7" fill="url(#rsif)"/></g>
<rect x="19.5" y="330" width="846.0" height="2" fill="#1e1e9e"/>
<rect x="19.5" y="382" width="846.0" height="2" fill="#1e1e9e"/>
<polyline points="19.5,375.0 27.5,376.0 34.8,374.6 38.3,355.8 43.1,358.8 48.3,354.2 56.7,351.0 64.0,346.9 68.1,355.8 72.3,352.0 75.4,352.0 84.8,362.5 87.9,357.3 92.1,360.4 96.2,353.0 102.5,359.4 107.7,363.5 112.5,369.8 116.7,338.5 120.2,344.8 123.3,342.7 133.8,342.7 136.9,349.0 141.0,362.5 148.3,361.5 158.8,364.6 161.9,358.3 166.0,366.7 177.5,366.7 182.7,377.0 190.0,360.4 194.2,363.5 198.3,361.5 202.5,361.5 208.8,358.3 212.9,360.4 216.0,364.6 220.2,362.5 229.6,374.0 231.7,375.0 235.8,382.3 240.0,371.9 244.2,367.7 248.3,369.8 250.0,366.7 255.8,356.2 261.5,365.6 264.6,366.7 271.9,360.4 283.3,366.7 288.5,378.8 292.7,374.6 296.9,374.6 301.0,379.6 305.2,370.8 309.4,372.9 313.5,361.5 317.7,360.4 325.0,354.6 331.2,354.6 338.5,358.3 342.7,353.0 346.9,360.4 351.0,362.0 358.3,349.6 362.5,360.4 370.8,352.0 375.0,354.2 379.2,362.9 383.3,362.9 387.5,367.7 391.7,359.4 397.9,357.3 404.2,366.7 410.4,343.8 414.6,344.8 420.8,341.2 429.2,342.0 432.3,341.2 436.5,351.0 440.6,343.3 447.9,346.9 453.1,359.4 460.4,371.2 468.8,365.6 472.9,369.2 477.1,366.7 485.4,363.8 490.2,368.3 497.5,364.2 505.8,369.8" fill="none" stroke="#f39a3c" stroke-width="1" stroke-linejoin="round"/>
<polyline points="505.8,369.8 510.0,386.5 515.2,384.4 521.5,386.5" fill="none" stroke="#38dc38" stroke-width="1" stroke-linejoin="round"/>
<polyline points="521.5,386.5 526.7,374.6" fill="none" stroke="#f39a3c" stroke-width="1" stroke-linejoin="round"/>
<polyline points="526.7,374.6 530.8,383.3 536.0,386.5 540.2,385.4 547.5,387.9 554.8,385.4 559.0,393.3 563.1,389.6 567.3,392.0 575.6,383.3 585.0,391.7 596.5,397.9" fill="none" stroke="#38dc38" stroke-width="1" stroke-linejoin="round"/>
<polyline points="596.5,397.9 600.6,382.3 604.2,374.6 610.0,379.2 616.2,379.6 620.4,371.2 624.6,375.0" fill="none" stroke="#f39a3c" stroke-width="1" stroke-linejoin="round"/>
<polyline points="624.6,375.0 628.8,383.3" fill="none" stroke="#38dc38" stroke-width="1" stroke-linejoin="round"/>
<polyline points="628.8,383.3 631.9,381.2 639.2,375.0 644.4,375.4 649.6,381.2 653.8,371.2 657.9,379.6 661.0,381.2 668.3,380.2 673.5,373.3 682.9,379.6" fill="none" stroke="#f39a3c" stroke-width="1" stroke-linejoin="round"/>
<polyline points="682.9,379.6 686.0,385.4 694.4,389.6 698.5,383.3" fill="none" stroke="#38dc38" stroke-width="1" stroke-linejoin="round"/>
<polyline points="698.5,383.3 707.9,360.4 714.2,354.2 719.2,355.8 723.3,350.0 727.5,339.6 731.7,347.9 735.8,351.7 739.0,349.6 743.1,352.0 747.3,357.3 751.5,357.3 759.8,364.6 765.0,365.0 769.2,368.8 775.4,380.2 778.5,379.2 784.8,373.3 789.0,374.6 795.2,372.9 800.4,364.6 805.6,364.2 809.8,366.2 817.1,355.2 821.2,352.0 825.4,355.8 829.2,347.5 833.3,355.8 837.9,355.2 846.2,342.7 850.4,341.7 854.6,350.4 861.9,344.8 865.4,349.0" fill="none" stroke="#f39a3c" stroke-width="1" stroke-linejoin="round"/>
</g>
<rect x="21" y="329" width="16" height="12" fill="#3b4249"/>
<text x="21.5" y="339.2" font-size="11" fill="#f08c30" textLength="15" lengthAdjust="spacingAndGlyphs">RSI</text>
<line x1="902" y1="356.5" x2="906" y2="356.5" stroke="#b7c4d2" stroke-width="1"/>
<text x="910" y="362.8" font-size="11" fill="#f4f4f4">50</text>
<line x1="26.5" y1="401" x2="26.5" y2="405" stroke="#b7c4d2" stroke-width="1"/>
<text x="25.5" y="424.2" font-size="11.5" font-weight="bold" fill="#eef0f2" text-anchor="middle" textLength="11.8" lengthAdjust="spacingAndGlyphs">24</text>
<line x1="51.5" y1="401" x2="51.5" y2="405" stroke="#b7c4d2" stroke-width="1"/>
<text x="50.5" y="424.2" font-size="11.5" font-weight="bold" fill="#eef0f2" text-anchor="middle" textLength="11.8" lengthAdjust="spacingAndGlyphs">25</text>
<line x1="75.5" y1="401" x2="75.5" y2="405" stroke="#b7c4d2" stroke-width="1"/>
<text x="74.5" y="424.2" font-size="11.5" font-weight="bold" fill="#eef0f2" text-anchor="middle" textLength="11.8" lengthAdjust="spacingAndGlyphs">26</text>
<line x1="100.5" y1="401" x2="100.5" y2="405" stroke="#b7c4d2" stroke-width="1"/>
<text x="99.5" y="424.2" font-size="11.5" font-weight="bold" fill="#eef0f2" text-anchor="middle" textLength="11.8" lengthAdjust="spacingAndGlyphs">29</text>
<line x1="124.5" y1="401" x2="124.5" y2="405" stroke="#b7c4d2" stroke-width="1"/>
<text x="123.5" y="424.2" font-size="11.5" font-weight="bold" fill="#eef0f2" text-anchor="middle" textLength="11.8" lengthAdjust="spacingAndGlyphs">30</text>
<line x1="149.5" y1="401" x2="149.5" y2="405" stroke="#b7c4d2" stroke-width="1"/>
<text x="148.5" y="424.2" font-size="11.5" font-weight="bold" fill="#eef0f2" text-anchor="middle" textLength="5.9" lengthAdjust="spacingAndGlyphs">1</text>
<line x1="174.5" y1="401" x2="174.5" y2="405" stroke="#b7c4d2" stroke-width="1"/>
<text x="173.5" y="424.2" font-size="11.5" font-weight="bold" fill="#eef0f2" text-anchor="middle" textLength="5.9" lengthAdjust="spacingAndGlyphs">2</text>
<line x1="198.5" y1="401" x2="198.5" y2="405" stroke="#b7c4d2" stroke-width="1"/>
<text x="197.5" y="424.2" font-size="11.5" font-weight="bold" fill="#eef0f2" text-anchor="middle" textLength="5.9" lengthAdjust="spacingAndGlyphs">3</text>
<line x1="223.5" y1="401" x2="223.5" y2="405" stroke="#b7c4d2" stroke-width="1"/>
<text x="222.5" y="424.2" font-size="11.5" font-weight="bold" fill="#eef0f2" text-anchor="middle" textLength="5.9" lengthAdjust="spacingAndGlyphs">6</text>
<line x1="247.5" y1="401" x2="247.5" y2="405" stroke="#b7c4d2" stroke-width="1"/>
<text x="246.5" y="424.2" font-size="11.5" font-weight="bold" fill="#eef0f2" text-anchor="middle" textLength="5.9" lengthAdjust="spacingAndGlyphs">7</text>
<line x1="272.5" y1="401" x2="272.5" y2="405" stroke="#b7c4d2" stroke-width="1"/>
<text x="271.5" y="424.2" font-size="11.5" font-weight="bold" fill="#eef0f2" text-anchor="middle" textLength="5.9" lengthAdjust="spacingAndGlyphs">8</text>
<line x1="297.5" y1="401" x2="297.5" y2="405" stroke="#b7c4d2" stroke-width="1"/>
<text x="296.5" y="424.2" font-size="11.5" font-weight="bold" fill="#eef0f2" text-anchor="middle" textLength="5.9" lengthAdjust="spacingAndGlyphs">9</text>
<line x1="321.5" y1="401" x2="321.5" y2="405" stroke="#b7c4d2" stroke-width="1"/>
<text x="320.5" y="424.2" font-size="11.5" font-weight="bold" fill="#eef0f2" text-anchor="middle" textLength="11.8" lengthAdjust="spacingAndGlyphs">10</text>
<line x1="346.5" y1="401" x2="346.5" y2="405" stroke="#b7c4d2" stroke-width="1"/>
<text x="345.5" y="424.2" font-size="11.5" font-weight="bold" fill="#eef0f2" text-anchor="middle" textLength="11.8" lengthAdjust="spacingAndGlyphs">13</text>
<line x1="370.5" y1="401" x2="370.5" y2="405" stroke="#b7c4d2" stroke-width="1"/>
<text x="369.5" y="424.2" font-size="11.5" font-weight="bold" fill="#eef0f2" text-anchor="middle" textLength="11.8" lengthAdjust="spacingAndGlyphs">14</text>
<line x1="395.5" y1="401" x2="395.5" y2="405" stroke="#b7c4d2" stroke-width="1"/>
<text x="394.5" y="424.2" font-size="11.5" font-weight="bold" fill="#eef0f2" text-anchor="middle" textLength="11.8" lengthAdjust="spacingAndGlyphs">15</text>
<line x1="419.5" y1="401" x2="419.5" y2="405" stroke="#b7c4d2" stroke-width="1"/>
<text x="418.5" y="424.2" font-size="11.5" font-weight="bold" fill="#eef0f2" text-anchor="middle" textLength="11.8" lengthAdjust="spacingAndGlyphs">16</text>
<line x1="444.5" y1="401" x2="444.5" y2="405" stroke="#b7c4d2" stroke-width="1"/>
<text x="443.5" y="424.2" font-size="11.5" font-weight="bold" fill="#eef0f2" text-anchor="middle" textLength="11.8" lengthAdjust="spacingAndGlyphs">17</text>
<line x1="469.5" y1="401" x2="469.5" y2="405" stroke="#b7c4d2" stroke-width="1"/>
<text x="468.5" y="424.2" font-size="11.5" font-weight="bold" fill="#eef0f2" text-anchor="middle" textLength="11.8" lengthAdjust="spacingAndGlyphs">20</text>
<line x1="493.5" y1="401" x2="493.5" y2="405" stroke="#b7c4d2" stroke-width="1"/>
<text x="492.5" y="424.2" font-size="11.5" font-weight="bold" fill="#eef0f2" text-anchor="middle" textLength="11.8" lengthAdjust="spacingAndGlyphs">21</text>
<line x1="518.5" y1="401" x2="518.5" y2="405" stroke="#b7c4d2" stroke-width="1"/>
<text x="517.5" y="424.2" font-size="11.5" font-weight="bold" fill="#eef0f2" text-anchor="middle" textLength="11.8" lengthAdjust="spacingAndGlyphs">22</text>
<line x1="542.5" y1="401" x2="542.5" y2="405" stroke="#b7c4d2" stroke-width="1"/>
<text x="541.5" y="424.2" font-size="11.5" font-weight="bold" fill="#eef0f2" text-anchor="middle" textLength="11.8" lengthAdjust="spacingAndGlyphs">23</text>
<line x1="567.5" y1="401" x2="567.5" y2="405" stroke="#b7c4d2" stroke-width="1"/>
<text x="566.5" y="424.2" font-size="11.5" font-weight="bold" fill="#eef0f2" text-anchor="middle" textLength="11.8" lengthAdjust="spacingAndGlyphs">24</text>
<line x1="592.5" y1="401" x2="592.5" y2="405" stroke="#b7c4d2" stroke-width="1"/>
<text x="591.5" y="424.2" font-size="11.5" font-weight="bold" fill="#eef0f2" text-anchor="middle" textLength="11.8" lengthAdjust="spacingAndGlyphs">27</text>
<line x1="616.5" y1="401" x2="616.5" y2="405" stroke="#b7c4d2" stroke-width="1"/>
<text x="615.5" y="424.2" font-size="11.5" font-weight="bold" fill="#eef0f2" text-anchor="middle" textLength="11.8" lengthAdjust="spacingAndGlyphs">28</text>
<line x1="641.5" y1="401" x2="641.5" y2="405" stroke="#b7c4d2" stroke-width="1"/>
<text x="640.5" y="424.2" font-size="11.5" font-weight="bold" fill="#eef0f2" text-anchor="middle" textLength="11.8" lengthAdjust="spacingAndGlyphs">29</text>
<line x1="665.5" y1="401" x2="665.5" y2="405" stroke="#b7c4d2" stroke-width="1"/>
<text x="664.5" y="424.2" font-size="11.5" font-weight="bold" fill="#eef0f2" text-anchor="middle" textLength="11.8" lengthAdjust="spacingAndGlyphs">30</text>
<line x1="690.5" y1="401" x2="690.5" y2="405" stroke="#b7c4d2" stroke-width="1"/>
<text x="689.5" y="424.2" font-size="11.5" font-weight="bold" fill="#eef0f2" text-anchor="middle" textLength="11.8" lengthAdjust="spacingAndGlyphs">31</text>
<line x1="714.5" y1="401" x2="714.5" y2="405" stroke="#b7c4d2" stroke-width="1"/>
<text x="713.5" y="424.2" font-size="11.5" font-weight="bold" fill="#eef0f2" text-anchor="middle" textLength="5.9" lengthAdjust="spacingAndGlyphs">3</text>
<line x1="739.5" y1="401" x2="739.5" y2="405" stroke="#b7c4d2" stroke-width="1"/>
<text x="738.5" y="424.2" font-size="11.5" font-weight="bold" fill="#eef0f2" text-anchor="middle" textLength="5.9" lengthAdjust="spacingAndGlyphs">4</text>
<line x1="764.5" y1="401" x2="764.5" y2="405" stroke="#b7c4d2" stroke-width="1"/>
<text x="763.5" y="424.2" font-size="11.5" font-weight="bold" fill="#eef0f2" text-anchor="middle" textLength="5.9" lengthAdjust="spacingAndGlyphs">5</text>
<line x1="788.5" y1="401" x2="788.5" y2="405" stroke="#b7c4d2" stroke-width="1"/>
<text x="787.5" y="424.2" font-size="11.5" font-weight="bold" fill="#eef0f2" text-anchor="middle" textLength="5.9" lengthAdjust="spacingAndGlyphs">6</text>
<line x1="813.5" y1="401" x2="813.5" y2="405" stroke="#b7c4d2" stroke-width="1"/>
<text x="812.5" y="424.2" font-size="11.5" font-weight="bold" fill="#eef0f2" text-anchor="middle" textLength="5.9" lengthAdjust="spacingAndGlyphs">7</text>
<line x1="837.5" y1="401" x2="837.5" y2="405" stroke="#b7c4d2" stroke-width="1"/>
<text x="836.5" y="424.2" font-size="11.5" font-weight="bold" fill="#eef0f2" text-anchor="middle" textLength="11.8" lengthAdjust="spacingAndGlyphs">10</text>
<line x1="862.5" y1="401" x2="862.5" y2="405" stroke="#b7c4d2" stroke-width="1"/>
<text x="861.5" y="424.2" font-size="11.5" font-weight="bold" fill="#eef0f2" text-anchor="middle" textLength="11.8" lengthAdjust="spacingAndGlyphs">11</text>
<line x1="887.5" y1="401" x2="887.5" y2="405" stroke="#b7c4d2" stroke-width="1"/>
<text x="886.5" y="424.2" font-size="11.5" font-weight="bold" fill="#eef0f2" text-anchor="middle" textLength="11.8" lengthAdjust="spacingAndGlyphs">12</text>
<path d="M19.5 378.5 H87.5 L89.5 380.5 V395.5 L87.5 397.5 H19.5 Z" fill="#5c6d82" stroke="#c6d6e2" stroke-width="1.2"/>
<rect x="19.0" y="378" width="2" height="27" fill="#d2e6e6"/>
<text x="27.5" y="392" font-size="11" fill="#f4f6f8">Июнь 2020</text>
<path d="M150.0 378.5 H216.0 L218.0 380.5 V395.5 L216.0 397.5 H150.0 Z" fill="#5c6d82" stroke="#c6d6e2" stroke-width="1.2"/>
<rect x="150.0" y="378" width="2" height="27" fill="#d2e6e6"/>
<text x="158.0" y="392" font-size="11" fill="#f4f6f8">Июль 2020</text>
<path d="M714.5 378.5 H772.5 L774.5 380.5 V395.5 L772.5 397.5 H714.5 Z" fill="#5c6d82" stroke="#c6d6e2" stroke-width="1.2"/>
<rect x="714.0" y="378" width="2" height="27" fill="#d2e6e6"/>
<text x="722.5" y="392" font-size="11" fill="#f4f6f8">Авг 2020</text>
</svg></body></html>
